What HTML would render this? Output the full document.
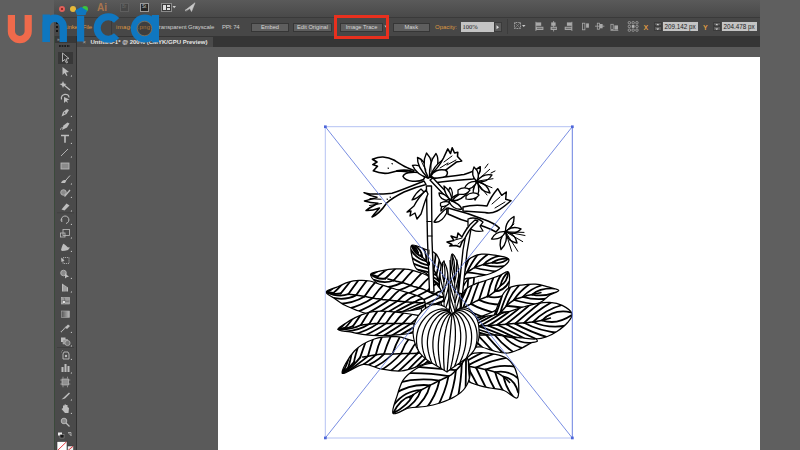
<!DOCTYPE html>
<html><head><meta charset="utf-8">
<style>
*{margin:0;padding:0;box-sizing:border-box}
html,body{width:800px;height:450px;overflow:hidden;background:#5f5f5f;font-family:"Liberation Sans",sans-serif}
.abs{position:absolute}
#win{position:absolute;left:54px;top:0;width:706px;height:450px;background:#575757}
#title{position:absolute;left:54px;top:0;width:706px;height:17px;background:linear-gradient(#5a5a5a,#494949)}
#ctrl{position:absolute;left:54px;top:17px;width:706px;height:19px;background:#474747;border-top:1px solid #3a3a3a}
#tabs{position:absolute;left:77px;top:36px;width:683px;height:11px;background:#353535}
#tab{position:absolute;left:77px;top:37px;width:136px;height:10px;background:#4a4a4a}
#canvas{position:absolute;left:77px;top:47px;width:683px;height:403px;background:#5a5a5a}
#board{position:absolute;left:218px;top:57px;width:542px;height:394px;background:#fff}
#tools{position:absolute;left:54px;top:36px;width:23px;height:414px;background:#4a4a4a;border-left:1px solid #3b4a3b;border-right:1px solid #303030}
.t{position:absolute;font-size:6.3px;white-space:nowrap;line-height:1}
.btn{position:absolute;top:22.5px;height:9px;background:#5e5e5e;border:1px solid #363636;color:#d8d8d8;font-size:5.7px;text-align:center;line-height:7.2px}
.inp{position:absolute;background:#c4c4c4;color:#222;font-size:7px;line-height:9px;padding-left:2px}
</style></head><body>
<div id="win"></div>
<div id="title"></div>
<div id="ctrl"></div>
<div id="tools"></div>
<div id="tabs"></div>
<div id="tab"></div>
<div id="canvas"></div>
<div id="board"></div>
<!-- title bar items -->
<div class="abs" style="left:58.5px;top:5.5px;width:6px;height:6px;border-radius:50%;background:#e2605a"></div>
<div class="abs" style="left:60.5px;top:7.5px;width:2px;height:2px;border-radius:50%;background:#7a1a14"></div>
<div class="abs" style="left:70px;top:5.5px;width:6px;height:6px;border-radius:50%;background:#e6b83a"></div>
<div class="abs" style="left:81.5px;top:5.5px;width:6px;height:6px;border-radius:50%;background:#3cc33c"></div>
<div class="t" style="left:97px;top:2.5px;font-size:10px;color:#a8754e;font-weight:bold;letter-spacing:0px">Ai</div>
<div class="abs" style="left:120px;top:3px;width:9px;height:8.5px;border:1px solid #5e5e5e;background:#474747"></div>
<div class="t" style="left:122px;top:5px;font-size:4.5px;color:#6a6a6a">Br</div>
<div class="abs" style="left:140px;top:3px;width:9px;height:8.5px;border:1px solid #9a9a9a;background:#262626"></div>
<div class="t" style="left:142px;top:5px;font-size:4.5px;color:#ccc">St</div>
<div class="abs" style="left:161px;top:2.5px;width:10.5px;height:9px;border:1px solid #8a8a8a;background:#3a3a3a"></div>
<div class="abs" style="left:163px;top:4.5px;width:3px;height:5px;background:#ddd"></div>
<div class="abs" style="left:167px;top:4.5px;width:3px;height:2px;background:#ddd"></div>
<div class="abs" style="left:167px;top:7.5px;width:3px;height:2px;background:#ddd"></div>
<svg class="abs" style="left:172px;top:5px" width="5" height="4"><path d="M0.5,1 L4,1 L2.25,3.2Z" fill="#ccc"/></svg>
<svg class="abs" style="left:184px;top:2px" width="12" height="10"><path d="M1,8.5 L11,0.8 L7.5,9.5 L6,6.5 Z M2,9.5 L4.5,7" fill="#c8c8c8" stroke="#c8c8c8" stroke-width="0.6"/></svg>

<!-- control bar -->
<div class="abs" style="left:55.5px;top:21px;width:2px;height:12px;background-image:radial-gradient(circle,#111 0.7px,transparent 0.9px);background-size:2px 4px"></div>
<div class="t" style="left:64px;top:23.6px;font-size:6px;letter-spacing:-0.1px;color:#de9842">Linked File</div>
<div class="abs" style="left:110.5px;top:19px;width:1px;height:15px;background:#3a3a3a"></div>
<div class="t" style="left:116px;top:23.6px;font-size:6px;letter-spacing:0.3px;color:#de9842">image1.png</div>
<div class="t" style="left:155.5px;top:23.6px;font-size:6px;letter-spacing:-0.1px;color:#cfcfcf">Transparent Grayscale</div>
<div class="t" style="left:222px;top:23.6px;font-size:6px;letter-spacing:-0.35px;color:#cfcfcf">PPI: 74</div>
<div class="btn" style="left:251px;width:38px">Embed</div>
<div class="btn" style="left:293px;width:39px">Edit Original</div>
<div class="btn" style="left:340px;width:43px">Image Trace</div>
<svg class="abs" style="left:383.5px;top:25px" width="4" height="4"><path d="M0.3,0.5 L3.3,0.5 L1.8,2.5Z" fill="#bbb"/></svg>
<div class="btn" style="left:392.5px;width:37.5px">Mask</div>
<div class="abs" style="left:334px;top:14.5px;width:54.5px;height:24px;border:3px solid #e8301e"></div>
<div class="t" style="left:435px;top:23.6px;font-size:6px;color:#de9842">Opacity:</div>
<div class="inp" style="left:460.5px;top:22px;width:33px;height:9.5px;font-family:'Liberation Serif',serif;font-size:6.5px;line-height:9px">100%</div>
<div class="abs" style="left:493.5px;top:22px;width:8.5px;height:9.5px;background:#5a5a5a;border:1px solid #3a3a3a"></div>
<svg class="abs" style="left:496px;top:24.5px" width="4" height="5"><path d="M0.5,0.3 L3,2.2 L0.5,4.2Z" fill="#ddd"/></svg>
<div class="abs" style="left:507px;top:19px;width:1px;height:15px;background:#3c3c3c"></div>
<svg class="abs" style="left:513px;top:21px" width="14" height="12">
 <rect x="1.5" y="1.5" width="6" height="6" fill="none" stroke="#bbb" stroke-width="0.8" stroke-dasharray="1 0.6"/>
 <path d="M1.5,1.5 L7.5,7.5 M7.5,1.5 L1.5,7.5" stroke="#999" stroke-width="0.5"/>
 <path d="M9,4 L12.5,4 L10.75,6Z" fill="#ccc"/>
</svg>
<svg class="abs" style="left:0;top:0" width="650" height="40">
 <g fill="#a9a9a9">
  <rect x="535.9" y="22.4" width="5.3" height="3.4"/><rect x="535.9" y="26.75" width="7.5" height="3.2"/>
  <rect x="551.2" y="22.4" width="4.4" height="3.4"/><rect x="550.6" y="26.75" width="6.3" height="3.2"/>
  <rect x="566.9" y="22.4" width="5" height="3.4"/><rect x="564.7" y="26.75" width="7.2" height="3.2"/>
  <rect x="586.1" y="23.4" width="2.8" height="4.3"/>
  <rect x="600" y="24" width="2.6" height="4.3"/>
  <rect x="614.4" y="25.4" width="3.6" height="4.2"/>
 </g>
 <g fill="none" stroke="#a9a9a9" stroke-width="0.8">
  <path d="M535.9,21.8 V31 M553.6,21 V31.5 M571.9,21.8 V31"/>
  <rect x="582.6" y="23.2" width="2.3" height="6.6"/>
  <rect x="597.3" y="23.2" width="2.3" height="6"/>
  <path d="M595,26.2 H604.4"/>
  <rect x="610.9" y="24.3" width="2.3" height="5.3"/>
  <path d="M610.5,30.4 H618.3"/>
 </g>
 <g fill="#575757"><rect x="537" y="27.8" width="5.5" height="0.9"/><rect x="551.7" y="27.8" width="4.5" height="0.9"/><rect x="565.7" y="27.8" width="5.5" height="0.9"/></g>
 <g fill="none" stroke="#b5b5b5" stroke-width="0.7">
  <rect x="628.2" y="21.6" width="2.3" height="2.3" rx="0.8"/><rect x="632" y="21.6" width="2.3" height="2.3" rx="0.8"/><rect x="635.8" y="21.6" width="2.3" height="2.3" rx="0.8"/>
  <rect x="628.2" y="25.3" width="2.3" height="2.3" rx="0.8"/><rect x="635.8" y="25.3" width="2.3" height="2.3" rx="0.8"/>
  <rect x="628.2" y="29" width="2.3" height="2.3" rx="0.8"/><rect x="632" y="29" width="2.3" height="2.3" rx="0.8"/><rect x="635.8" y="29" width="2.3" height="2.3" rx="0.8"/>
 </g>
 <rect x="631.8" y="25.1" width="2.7" height="2.7" fill="#b5b5b5"/>
</svg>
<div class="t" style="left:643.5px;top:23.5px;font-size:7px;color:#de9842;font-weight:bold">X</div>
<div class="abs" style="left:653.5px;top:21.5px;width:8.5px;height:4.8px;background:#5c5c5c;border:1px solid #3b3b3b"></div>
<div class="abs" style="left:653.5px;top:26.3px;width:8.5px;height:4.8px;background:#5c5c5c;border:1px solid #3b3b3b"></div>
<svg class="abs" style="left:656px;top:22.5px" width="4" height="8"><path d="M0.3,2.2 L3.3,2.2 L1.8,0.7Z M0.3,5.5 L3.3,5.5 L1.8,7Z" fill="#ddd"/></svg>
<div class="inp" style="left:662.5px;top:21.5px;width:35.5px;height:9.8px;font-size:6.3px;line-height:10px">209.142 px</div>
<div class="t" style="left:703px;top:23.5px;font-size:7px;color:#de9842;font-weight:bold">Y</div>
<div class="abs" style="left:712.5px;top:21.5px;width:8.5px;height:4.8px;background:#5c5c5c;border:1px solid #3b3b3b"></div>
<div class="abs" style="left:712.5px;top:26.3px;width:8.5px;height:4.8px;background:#5c5c5c;border:1px solid #3b3b3b"></div>
<svg class="abs" style="left:715px;top:22.5px" width="4" height="8"><path d="M0.3,2.2 L3.3,2.2 L1.8,0.7Z M0.3,5.5 L3.3,5.5 L1.8,7Z" fill="#ddd"/></svg>
<div class="inp" style="left:721.5px;top:21.5px;width:35.5px;height:9.8px;font-size:6.3px;line-height:10px">204.478 px</div>

<!-- tab bar -->
<div class="t" style="left:82.5px;top:39px;font-size:6px;color:#aaa">×</div>
<div class="t" style="left:90.5px;top:38.8px;font-size:6px;color:#e4e4e4;font-weight:bold">Untitled-1* @ 200% (CMYK/GPU Preview)</div>

<!-- tools panel -->
<div class="abs" style="left:55px;top:36px;width:21px;height:6.5px;background:#383838"></div>
<div class="t" style="left:57px;top:37px;font-size:5px;color:#aaa">»</div>
<div class="abs" style="left:59px;top:45px;width:10.6px;height:2px;background-image:linear-gradient(90deg,#1e1e1e 62%,transparent 62%);background-size:2.65px 2px"></div>
<div class="abs" style="left:57.5px;top:52.2px;width:15.5px;height:12.2px;background:#383838"></div>
<svg class="abs" style="left:54px;top:47px" width="23" height="403" fill="#c8c8c8" stroke="#c8c8c8">
</svg>

<svg class="abs" style="left:0;top:0" width="80" height="450"><path d="M62.5,53.0 L62.5,61.5 L64.5,59.5 L66.5,63.0 L67.5,62.5 L66,59.0 L69,58.5 Z" fill="none" stroke="#bdbdbd" stroke-width="0.9"/>
<path d="M62.5,67.0 L62.5,75.0 L64.5,73.0 L66.5,76.0 L67.5,75.5 L66,72.5 L69,72.0 Z" fill="#bdbdbd"/>
<path d="M64,85.0 L70,90.0" stroke="#bdbdbd" stroke-width="1.3"/><path d="M63,81.0 L64,83.5 L66.5,84.0 L64.2,85.5 L63,88.0 L62,85.5 L59.5,84.0 L62,83.5 Z" fill="#bdbdbd"/>
<path d="M61.5,99.5 C60,93.5 69,92.5 69,97.5" fill="none" stroke="#bdbdbd" stroke-width="1.2"/><path d="M64,97.0 L64,103.0 L65.8,101.3 L68,103.0 L67,100.3 L69.5,99.5 Z" fill="#bdbdbd"/>
<path d="M61.5,116.5 L63,112.0 L67,109.0 L69,110.0 L66.5,114.0 Z" fill="#bdbdbd"/><circle cx="64.6" cy="113.0" r="0.8" fill="#474747"/>
<path d="M62,130.0 L63.5,125.5 L67.5,122.5 L69.5,123.5 L67,127.5 Z" fill="#bdbdbd"/><path d="M60.5,130.0 c0,-2 1.5,-3 2.5,-2" fill="none" stroke="#bdbdbd" stroke-width="0.8"/>
<path d="M61,135.5 h8 M65,135.5 v7.2" fill="none" stroke="#bdbdbd" stroke-width="1.6"/>
<path d="M61,156.0 L68,149.0" stroke="#bdbdbd" stroke-width="0.9"/>
<rect x="61" y="163.0" width="8" height="6" fill="#8a8a8a" stroke="#bdbdbd" stroke-width="0.8"/>
<path d="M66,180.0 L70,175.5" stroke="#bdbdbd" stroke-width="1"/><path d="M61,183.0 C62,180.5 64,179.5 66.5,180.5 L65,183.0 Z" fill="#bdbdbd"/>
<circle cx="63.5" cy="192.5" r="2.8" fill="#8a8a8a" stroke="#bdbdbd" stroke-width="0.8"/><path d="M64.5,196.5 L70,190.0" stroke="#bdbdbd" stroke-width="1.3"/>
<path d="M61.5,209.5 L66.5,203.5 L69.5,205.5 L64.5,210.5 Z" fill="#bdbdbd"/>
<rect x="57" y="212.5" width="17" height="0.7" fill="#3c3c3c"/>
<path d="M62,222.0 A3.8,3.8 0 1 1 66,223.5" fill="none" stroke="#bdbdbd" stroke-width="1"/><path d="M60.5,220.0 h2" stroke="#bdbdbd" stroke-width="0.8"/>
<rect x="63" y="229.5" width="6.5" height="6" fill="none" stroke="#bdbdbd" stroke-width="0.8"/><rect x="60.5" y="233.0" width="4.5" height="4" fill="none" stroke="#bdbdbd" stroke-width="0.8"/>
<path d="M61,250.0 C62,247.0 63,243.0 64,244.0 C66,245.0 67,248.0 70,247.5 L68,250.0 C66,250.5 64,251.0 62,251.0 Z" fill="#bdbdbd"/>
<rect x="63" y="257.5" width="6" height="6" fill="none" stroke="#bdbdbd" stroke-width="0.8" stroke-dasharray="1.2 0.8"/><path d="M61,257.5 L64.5,260.5 L61.5,262.0 Z" fill="#bdbdbd"/>
<circle cx="63.5" cy="273.0" r="2.8" fill="#8a8a8a" stroke="#bdbdbd" stroke-width="0.8"/><path d="M65,273.0 L65,278.5 L67,277.0 L69,277.0 Z" fill="#bdbdbd"/>
<path d="M62,283.5 L62,291.5 L68,291.5 L68,287.5 Z" fill="#bdbdbd"/><path d="M64,285.5 v6 M66,286.5 v6" stroke="#474747" stroke-width="0.5"/>
<rect x="61.5" y="297.5" width="8" height="6.5" fill="#9a9a9a" stroke="#bdbdbd" stroke-width="0.6"/><path d="M61.5,301.0 C64,300.0 66,302.0 69.5,301.0 M64,297.5 C65,300.0 65,302.0 64,304.0" fill="none" stroke="#555" stroke-width="0.6"/><circle cx="64" cy="302.0" r="1" fill="#fff"/>
<defs><linearGradient id="gr" x1="0" x2="1"><stop offset="0" stop-color="#555"/><stop offset="1" stop-color="#bbb"/></linearGradient></defs>
<rect x="61.5" y="311.0" width="8" height="6.5" fill="url(#gr)" stroke="#a8a8a8" stroke-width="0.6"/>
<path d="M61,332.0 L66,327.0" stroke="#bdbdbd" stroke-width="1.2" stroke-dasharray="1 0.6"/><path d="M65,327.5 L68,324.5 L70,326.0 L67,329.0 Z" fill="#bdbdbd"/>
<rect x="61" y="337.5" width="4.5" height="4.5" fill="#bdbdbd"/><rect x="63" y="339.5" width="4.5" height="4.5" fill="#999" stroke="#bdbdbd" stroke-width="0.5"/><circle cx="67.5" cy="343.0" r="2.6" fill="#777" stroke="#bdbdbd" stroke-width="0.7"/>
<rect x="57" y="347" width="17" height="0.7" fill="#3c3c3c"/>
<path d="M64,352.0 L68,352.0 L69,354.0 L69,359.0 L63,359.0 L63,354.0 Z" fill="none" stroke="#bdbdbd" stroke-width="0.9"/><circle cx="66" cy="356.0" r="1.2" fill="#bdbdbd"/><path d="M61,352.0 l0.5,0 M62.5,350.5 l0.5,0" stroke="#bdbdbd" stroke-width="0.9"/>
<rect x="61.5" y="367.0" width="2" height="5" fill="#bdbdbd"/><rect x="64.5" y="364.0" width="2" height="8" fill="#bdbdbd"/><rect x="67.5" y="366.0" width="2" height="6" fill="#bdbdbd"/>
<rect x="62" y="379.0" width="6.5" height="6" fill="#8f8f8f" stroke="#bdbdbd" stroke-width="0.7"/><path d="M63,378.5 v-1.8 M67.5,378.5 v-1.8 M63,385.5 v1.8 M67.5,385.5 v1.8 M62,380.0 h-1.8 M68.5,380.0 h1.8 M62,384.0 h-1.8 M68.5,384.0 h1.8" stroke="#bdbdbd" stroke-width="0.6"/>
<path d="M61.5,399.5 L69,392.5 L70,393.5 L65,398.5 Z" fill="#bdbdbd"/>
<path d="M61.5,409.0 L63,408.0 L63,405.5 L64.5,405.5 L64.5,404.5 L66,404.5 L66,405.0 L67.5,405.0 L67.5,407.0 L69,408.0 L68.5,413.0 L65,413.0 Z" fill="#bdbdbd"/>
<circle cx="64" cy="421.0" r="2.8" fill="#8a8a8a" stroke="#bdbdbd" stroke-width="0.9"/><path d="M66,423.0 L69.5,426.5" stroke="#bdbdbd" stroke-width="1.3"/>
<rect x="58" y="432.5" width="4" height="3" fill="#eee"/><rect x="60" y="434.5" width="4" height="3.5" fill="#1a1a1a" stroke="#bbb" stroke-width="0.4"/>
<path d="M68,432.5 l3,0 l0,3 M68.5,433 l3,3" fill="none" stroke="#ccc" stroke-width="0.7"/>
<rect x="57" y="441.5" width="10" height="9" fill="#fff" stroke="#333" stroke-width="0.6"/><path d="M57.5,450.5 L66.5,441.8" stroke="#e0252a" stroke-width="0.9"/>
<rect x="67.5" y="446" width="6" height="5" fill="#eee" stroke="#333" stroke-width="0.5"/><path d="M68,450.5 L73,446.3" stroke="#e0252a" stroke-width="0.9"/>
<path d="M70.5,76.5 L72,75.0 L72,76.5 Z" fill="#cfcfcf"/>
<path d="M70.5,117.0 L72,115.5 L72,117.0 Z" fill="#cfcfcf"/>
<path d="M70.5,130.5 L72,129.0 L72,130.5 Z" fill="#cfcfcf"/>
<path d="M70.5,144.0 L72,142.5 L72,144.0 Z" fill="#cfcfcf"/>
<path d="M70.5,157.5 L72,156.0 L72,157.5 Z" fill="#cfcfcf"/>
<path d="M70.5,184.5 L72,183.0 L72,184.5 Z" fill="#cfcfcf"/>
<path d="M70.5,198.0 L72,196.5 L72,198.0 Z" fill="#cfcfcf"/>
<path d="M70.5,211.5 L72,210.0 L72,211.5 Z" fill="#cfcfcf"/>
<path d="M70.5,225.0 L72,223.5 L72,225.0 Z" fill="#cfcfcf"/>
<path d="M70.5,238.5 L72,237.0 L72,238.5 Z" fill="#cfcfcf"/>
<path d="M70.5,252.0 L72,250.5 L72,252.0 Z" fill="#cfcfcf"/>
<path d="M70.5,279.0 L72,277.5 L72,279.0 Z" fill="#cfcfcf"/>
<path d="M70.5,292.5 L72,291.0 L72,292.5 Z" fill="#cfcfcf"/>
<path d="M70.5,333.0 L72,331.5 L72,333.0 Z" fill="#cfcfcf"/>
<path d="M70.5,346.5 L72,345.0 L72,346.5 Z" fill="#cfcfcf"/>
<path d="M70.5,360.0 L72,358.5 L72,360.0 Z" fill="#cfcfcf"/>
<path d="M70.5,373.5 L72,372.0 L72,373.5 Z" fill="#cfcfcf"/>
<path d="M70.5,400.5 L72,399.0 L72,400.5 Z" fill="#cfcfcf"/>
<path d="M70.5,414.0 L72,412.5 L72,414.0 Z" fill="#cfcfcf"/></svg>
<svg class="abs" style="left:0;top:0" width="800" height="450" viewBox="0 0 800 450">
<clipPath id="fill0"><path d="M424,262 L478,258 L480,320 L420,322 Z"/></clipPath>
<path d="M424,262 L478,258 L480,320 L420,322 Z" fill="#fff"/>
<g clip-path="url(#fill0)" stroke="#000" stroke-width="1.7" fill="none">
<path d="M423.0,325 Q419.0,290 411.0,255"/>
<path d="M427.5,325 Q424.5,290 417.5,255"/>
<path d="M432.0,325 Q430.0,290 424.0,255"/>
<path d="M436.5,325 Q435.5,290 430.5,255"/>
<path d="M441.0,325 Q441.0,290 437.0,255"/>
<path d="M445.5,325 Q446.5,290 443.5,255"/>
<path d="M450.0,325 Q452.0,290 450.0,255"/>
<path d="M454.5,325 Q457.5,290 456.5,255"/>
<path d="M459.0,325 Q463.0,290 463.0,255"/>
<path d="M463.5,325 Q468.5,290 469.5,255"/>
<path d="M468.0,325 Q474.0,290 476.0,255"/>
<path d="M472.5,325 Q479.5,290 482.5,255"/>
<path d="M477.0,325 Q485.0,290 489.0,255"/>
</g>
<clipPath id="lf1"><path d="M446.0,292.0 C446.3,288.0 443.7,274.3 442.0,268.0 C440.3,261.7 438.7,257.1 436.0,254.0 C433.3,250.9 430.1,251.0 426.0,249.5 C421.9,248.0 414.0,243.8 411.7,245.2 C409.4,246.6 411.5,253.9 412.3,257.8 C413.1,261.8 413.8,266.0 416.5,268.9 C419.2,271.8 424.4,271.1 428.3,275.0 C432.2,278.9 437.1,289.2 440.0,292.0 C442.9,294.8 445.7,296.0 446.0,292.0Z"/></clipPath>
<path d="M446.0,292.0 C446.3,288.0 443.7,274.3 442.0,268.0 C440.3,261.7 438.7,257.1 436.0,254.0 C433.3,250.9 430.1,251.0 426.0,249.5 C421.9,248.0 414.0,243.8 411.7,245.2 C409.4,246.6 411.5,253.9 412.3,257.8 C413.1,261.8 413.8,266.0 416.5,268.9 C419.2,271.8 424.4,271.1 428.3,275.0 C432.2,278.9 437.1,289.2 440.0,292.0 C442.9,294.8 445.7,296.0 446.0,292.0Z" fill="#fff"/>
<g clip-path="url(#lf1)" stroke="#000" stroke-width="1.80" fill="none" stroke-linecap="round">
<path d="M443.0,292.0 C442.8,291.4 442.0,289.5 441.5,288.2 C441.0,286.9 440.5,285.6 440.0,284.4 C439.5,283.1 439.0,281.8 438.5,280.5 C438.0,279.3 437.5,278.0 437.1,276.7 C436.6,275.4 436.2,274.1 435.6,272.9 C434.9,271.7 434.1,270.7 433.3,269.7 C432.5,268.7 431.6,267.8 430.7,266.8 C429.8,265.8 428.9,264.9 428.0,263.8 C427.2,262.8 426.6,261.6 425.8,260.6 C424.9,259.6 424.0,258.7 423.0,257.8 C422.1,256.9 420.8,255.5 420.3,255.0" stroke-width="1.53"/>
<path d="M460.5,337.1 Q455.5,334.9 451.0,328.9"/>
<path d="M458.4,331.4 Q453.9,328.8 450.2,322.2"/>
<path d="M456.2,325.8 Q452.4,322.6 449.5,315.5"/>
<path d="M454.0,320.2 Q450.9,316.5 448.8,308.8"/>
<path d="M451.8,314.5 Q449.4,310.4 448.0,302.1"/>
<path d="M449.6,308.9 Q447.8,304.3 447.3,295.4"/>
<path d="M447.4,303.3 Q446.3,298.1 446.5,288.6"/>
<path d="M445.2,297.6 Q444.8,292.0 445.8,281.9"/>
<path d="M443.0,292.0 Q443.3,285.9 445.0,275.2"/>
<path d="M440.8,286.4 Q441.8,279.7 444.3,268.5"/>
<path d="M438.6,280.7 Q440.2,273.6 442.5,261.9"/>
<path d="M436.4,275.1 Q438.2,267.8 440.3,255.4"/>
<path d="M433.6,270.0 Q435.1,262.4 436.0,250.9"/>
<path d="M429.7,265.7 Q432.0,257.0 429.5,248.7"/>
<path d="M426.1,261.1 Q427.0,253.6 422.5,247.1"/>
<path d="M422.2,256.9 Q421.8,250.5 415.3,245.8"/>
<path d="M418.2,252.9 Q416.8,247.9 411.7,245.2"/>
<path d="M415.0,249.1 Q411.7,245.2 411.7,245.2"/>
<path d="M460.5,337.1 Q460.4,326.5 456.6,313.9"/>
<path d="M458.4,331.4 Q457.6,321.4 453.0,309.3"/>
<path d="M456.2,325.8 Q454.7,316.3 449.3,304.8"/>
<path d="M454.0,320.2 Q451.9,311.1 445.7,300.2"/>
<path d="M451.8,314.5 Q449.0,306.0 442.0,295.7"/>
<path d="M449.6,308.9 Q446.1,300.8 438.4,291.1"/>
<path d="M447.4,303.3 Q443.3,295.7 434.7,286.5"/>
<path d="M445.2,297.6 Q440.4,290.6 431.1,282.0"/>
<path d="M443.0,292.0 Q437.5,285.4 427.4,277.4"/>
<path d="M440.8,286.4 Q434.7,280.3 422.5,274.4"/>
<path d="M438.6,280.7 Q431.8,275.1 416.9,272.2"/>
<path d="M436.4,275.1 Q427.7,271.3 412.8,268.7"/>
<path d="M433.6,270.0 Q423.0,268.0 411.3,262.9"/>
<path d="M429.7,265.7 Q419.3,263.7 410.6,256.8"/>
<path d="M426.1,261.1 Q416.5,258.8 411.2,250.3"/>
<path d="M422.2,256.9 Q414.2,253.9 411.7,245.2"/>
<path d="M418.2,252.9 Q412.8,248.8 411.7,245.2"/>
</g>
<path d="M446.0,292.0 C446.3,288.0 443.7,274.3 442.0,268.0 C440.3,261.7 438.7,257.1 436.0,254.0 C433.3,250.9 430.1,251.0 426.0,249.5 C421.9,248.0 414.0,243.8 411.7,245.2 C409.4,246.6 411.5,253.9 412.3,257.8 C413.1,261.8 413.8,266.0 416.5,268.9 C419.2,271.8 424.4,271.1 428.3,275.0 C432.2,278.9 437.1,289.2 440.0,292.0 C442.9,294.8 445.7,296.0 446.0,292.0Z" fill="none" stroke="#000" stroke-width="1.25" stroke-linejoin="round"/>
<clipPath id="lf2"><path d="M450.0,322.0 C451.7,318.3 449.4,308.3 449.0,300.0 C448.6,291.7 448.5,278.3 447.5,272.0 C446.5,265.7 444.2,261.7 443.0,262.0 C441.8,262.3 440.7,267.7 440.0,274.0 C439.3,280.3 439.2,292.0 439.0,300.0 C438.8,308.0 437.2,318.3 439.0,322.0 C440.8,325.7 448.3,325.7 450.0,322.0Z"/></clipPath>
<path d="M450.0,322.0 C451.7,318.3 449.4,308.3 449.0,300.0 C448.6,291.7 448.5,278.3 447.5,272.0 C446.5,265.7 444.2,261.7 443.0,262.0 C441.8,262.3 440.7,267.7 440.0,274.0 C439.3,280.3 439.2,292.0 439.0,300.0 C438.8,308.0 437.2,318.3 439.0,322.0 C440.8,325.7 448.3,325.7 450.0,322.0Z" fill="#fff"/>
<g clip-path="url(#lf2)" stroke="#000" stroke-width="1.20" fill="none" stroke-linecap="round">
<path d="M444.5,322.0 C444.5,321.3 444.4,319.3 444.4,317.9 C444.4,316.5 444.3,315.1 444.3,313.8 C444.3,312.4 444.2,311.0 444.2,309.7 C444.2,308.3 444.2,306.9 444.1,305.5 C444.1,304.2 444.1,302.8 444.0,301.4 C444.0,300.1 444.0,298.7 444.0,297.3 C444.0,295.9 444.0,294.6 443.9,293.2 C443.9,291.8 443.9,290.5 443.9,289.1 C443.9,287.7 443.9,286.4 443.9,285.0 C443.9,283.6 443.9,282.2 443.8,280.9 C443.8,279.5 443.8,277.4 443.8,276.8" stroke-width="1.02"/>
<path d="M446.3,402.9 Q450.5,395.8 454.9,385.1"/>
<path d="M446.1,392.8 Q450.1,385.7 454.4,374.9"/>
<path d="M445.9,382.7 Q449.8,375.5 453.9,364.7"/>
<path d="M445.7,372.6 Q449.4,365.4 453.3,354.6"/>
<path d="M445.4,362.5 Q449.0,355.3 452.8,344.4"/>
<path d="M445.2,352.3 Q448.6,345.1 452.3,334.2"/>
<path d="M445.0,342.2 Q448.3,335.0 451.8,324.0"/>
<path d="M444.7,332.1 Q447.9,324.8 451.2,313.9"/>
<path d="M444.5,322.0 Q447.5,314.7 450.7,303.7"/>
<path d="M444.3,311.9 Q447.2,304.6 450.1,293.5"/>
<path d="M444.0,301.8 Q446.8,294.4 449.4,283.3"/>
<path d="M443.9,291.7 Q446.4,284.3 448.7,273.2"/>
<path d="M443.9,281.6 Q446.1,274.1 444.0,263.8"/>
<path d="M446.3,402.9 Q441.9,394.9 436.9,383.1"/>
<path d="M446.1,392.8 Q441.8,384.8 437.0,373.1"/>
<path d="M445.9,382.7 Q441.7,374.8 437.1,363.0"/>
<path d="M445.7,372.6 Q441.6,364.7 437.1,353.0"/>
<path d="M445.4,362.5 Q441.5,354.6 437.2,342.9"/>
<path d="M445.2,352.3 Q441.4,344.5 437.3,332.9"/>
<path d="M445.0,342.2 Q441.3,334.4 437.3,322.8"/>
<path d="M444.7,332.1 Q441.2,324.3 437.4,312.8"/>
<path d="M444.5,322.0 Q441.1,314.3 437.5,302.7"/>
<path d="M444.3,311.9 Q441.0,304.2 437.9,292.7"/>
<path d="M444.0,301.8 Q441.1,294.1 438.4,282.6"/>
<path d="M443.9,291.7 Q441.3,284.0 439.3,272.6"/>
<path d="M443.9,281.6 Q441.5,273.9 442.7,262.8"/>
</g>
<path d="M450.0,322.0 C451.7,318.3 449.4,308.3 449.0,300.0 C448.6,291.7 448.5,278.3 447.5,272.0 C446.5,265.7 444.2,261.7 443.0,262.0 C441.8,262.3 440.7,267.7 440.0,274.0 C439.3,280.3 439.2,292.0 439.0,300.0 C438.8,308.0 437.2,318.3 439.0,322.0 C440.8,325.7 448.3,325.7 450.0,322.0Z" fill="none" stroke="#000" stroke-width="1.25" stroke-linejoin="round"/>
<clipPath id="lf3"><path d="M461.0,322.0 C462.7,318.3 460.5,309.3 460.0,300.0 C459.5,290.7 459.3,273.7 458.0,266.0 C456.7,258.3 453.2,253.7 452.0,254.0 C450.8,254.3 450.8,260.3 450.5,268.0 C450.2,275.7 450.1,291.0 450.0,300.0 C449.9,309.0 448.2,318.3 450.0,322.0 C451.8,325.7 459.3,325.7 461.0,322.0Z"/></clipPath>
<path d="M461.0,322.0 C462.7,318.3 460.5,309.3 460.0,300.0 C459.5,290.7 459.3,273.7 458.0,266.0 C456.7,258.3 453.2,253.7 452.0,254.0 C450.8,254.3 450.8,260.3 450.5,268.0 C450.2,275.7 450.1,291.0 450.0,300.0 C449.9,309.0 448.2,318.3 450.0,322.0 C451.8,325.7 459.3,325.7 461.0,322.0Z" fill="#fff"/>
<g clip-path="url(#lf3)" stroke="#000" stroke-width="1.20" fill="none" stroke-linecap="round">
<path d="M455.5,322.0 C455.5,321.2 455.4,318.9 455.4,317.3 C455.4,315.8 455.3,314.2 455.3,312.7 C455.3,311.1 455.2,309.6 455.2,308.0 C455.1,306.5 455.1,304.9 455.1,303.4 C455.0,301.8 455.0,300.2 455.0,298.7 C454.9,297.1 454.9,295.6 454.9,294.0 C454.8,292.5 454.8,290.9 454.8,289.4 C454.7,287.8 454.7,286.3 454.7,284.7 C454.6,283.2 454.6,281.6 454.6,280.1 C454.5,278.5 454.5,276.9 454.5,275.4 C454.4,273.8 454.4,271.5 454.3,270.7" stroke-width="1.02"/>
<path d="M457.3,400.6 Q461.4,392.7 465.7,380.7"/>
<path d="M457.1,390.8 Q461.0,382.9 465.2,370.7"/>
<path d="M456.9,380.9 Q460.7,373.0 464.7,360.8"/>
<path d="M456.6,371.1 Q460.3,363.1 464.2,350.8"/>
<path d="M456.4,361.3 Q459.9,353.2 463.6,340.9"/>
<path d="M456.2,351.5 Q459.6,343.3 463.1,331.0"/>
<path d="M456.0,341.6 Q459.2,333.5 462.6,321.0"/>
<path d="M455.7,331.8 Q458.9,323.6 462.1,311.1"/>
<path d="M455.5,322.0 Q458.5,313.7 461.6,301.1"/>
<path d="M455.3,312.2 Q458.1,303.8 460.9,291.2"/>
<path d="M455.0,302.4 Q457.7,293.9 460.2,281.2"/>
<path d="M454.8,292.5 Q457.3,284.1 459.5,271.3"/>
<path d="M454.6,282.7 Q456.9,274.2 456.7,261.9"/>
<path d="M454.4,272.9 Q455.9,264.5 452.0,254.0"/>
<path d="M457.3,400.6 Q452.8,391.4 448.0,377.9"/>
<path d="M457.1,390.8 Q452.8,381.6 448.0,368.2"/>
<path d="M456.9,380.9 Q452.7,371.8 448.1,358.5"/>
<path d="M456.6,371.1 Q452.6,362.1 448.2,348.8"/>
<path d="M456.4,361.3 Q452.5,352.3 448.2,339.1"/>
<path d="M456.2,351.5 Q452.4,342.5 448.3,329.4"/>
<path d="M456.0,341.6 Q452.3,332.8 448.4,319.7"/>
<path d="M455.7,331.8 Q452.2,323.0 448.4,310.0"/>
<path d="M455.5,322.0 Q452.1,313.3 448.5,300.3"/>
<path d="M455.3,312.2 Q452.0,303.5 448.8,290.6"/>
<path d="M455.0,302.4 Q452.0,293.7 449.0,280.9"/>
<path d="M454.8,292.5 Q452.0,284.0 449.3,271.2"/>
<path d="M454.6,282.7 Q452.0,274.2 450.6,261.4"/>
<path d="M454.4,272.9 Q452.1,264.5 452.0,254.0"/>
</g>
<path d="M461.0,322.0 C462.7,318.3 460.5,309.3 460.0,300.0 C459.5,290.7 459.3,273.7 458.0,266.0 C456.7,258.3 453.2,253.7 452.0,254.0 C450.8,254.3 450.8,260.3 450.5,268.0 C450.2,275.7 450.1,291.0 450.0,300.0 C449.9,309.0 448.2,318.3 450.0,322.0 C451.8,325.7 459.3,325.7 461.0,322.0Z" fill="none" stroke="#000" stroke-width="1.25" stroke-linejoin="round"/>
<clipPath id="lf4"><path d="M458.0,285.0 C458.5,280.7 460.8,270.5 463.0,266.0 C465.2,261.5 467.9,259.8 471.0,257.8 C474.1,255.8 477.9,254.6 481.7,254.2 C485.5,253.8 489.6,254.3 494.0,255.1 C498.4,255.8 506.5,257.0 508.3,258.7 C510.1,260.4 507.8,263.0 504.8,265.5 C501.9,268.0 495.4,271.6 490.6,273.5 C485.9,275.4 480.2,275.9 476.3,277.0 C472.4,278.1 470.1,277.5 467.4,280.0 C464.7,282.5 461.6,291.2 460.0,292.0 C458.4,292.8 457.5,289.3 458.0,285.0Z"/></clipPath>
<path d="M458.0,285.0 C458.5,280.7 460.8,270.5 463.0,266.0 C465.2,261.5 467.9,259.8 471.0,257.8 C474.1,255.8 477.9,254.6 481.7,254.2 C485.5,253.8 489.6,254.3 494.0,255.1 C498.4,255.8 506.5,257.0 508.3,258.7 C510.1,260.4 507.8,263.0 504.8,265.5 C501.9,268.0 495.4,271.6 490.6,273.5 C485.9,275.4 480.2,275.9 476.3,277.0 C472.4,278.1 470.1,277.5 467.4,280.0 C464.7,282.5 461.6,291.2 460.0,292.0 C458.4,292.8 457.5,289.3 458.0,285.0Z" fill="#fff"/>
<g clip-path="url(#lf4)" stroke="#000" stroke-width="1.80" fill="none" stroke-linecap="round">
<path d="M459.0,288.5 C459.3,287.8 460.1,285.8 460.7,284.4 C461.3,283.1 461.8,281.7 462.4,280.4 C463.0,279.0 463.5,277.5 464.1,276.3 C464.8,275.1 465.4,273.9 466.4,272.9 C467.4,272.0 468.7,271.3 469.9,270.5 C471.1,269.7 472.3,268.9 473.5,268.2 C474.8,267.5 476.1,266.9 477.5,266.4 C478.8,265.9 480.3,265.6 481.7,265.1 C483.2,264.7 484.6,264.2 486.0,263.9 C487.4,263.5 488.8,263.3 490.2,263.1 C491.6,262.8 493.7,262.3 494.4,262.2" stroke-width="1.53"/>
<path d="M430.3,357.1 Q437.4,351.7 445.0,341.0"/>
<path d="M433.8,348.5 Q440.4,342.5 447.2,331.1"/>
<path d="M437.4,340.0 Q443.3,333.3 449.4,321.2"/>
<path d="M441.0,331.4 Q446.3,324.1 451.6,311.3"/>
<path d="M444.6,322.8 Q449.2,314.9 453.8,301.4"/>
<path d="M448.2,314.2 Q452.2,305.7 456.0,291.5"/>
<path d="M451.8,305.7 Q455.1,296.5 458.2,281.6"/>
<path d="M455.4,297.1 Q458.1,287.4 460.4,271.7"/>
<path d="M459.0,288.5 Q461.0,278.2 463.6,262.1"/>
<path d="M462.6,279.9 Q464.2,269.3 470.6,254.7"/>
<path d="M467.0,272.4 Q471.2,262.9 480.1,251.4"/>
<path d="M474.7,267.5 Q480.0,259.2 490.3,252.7"/>
<path d="M483.6,264.6 Q489.3,257.9 500.4,255.7"/>
<path d="M492.5,262.6 Q498.7,258.1 508.3,258.7"/>
<path d="M430.3,357.1 Q429.5,347.2 431.6,334.8"/>
<path d="M433.8,348.5 Q433.8,339.2 436.6,327.6"/>
<path d="M437.4,340.0 Q438.0,331.3 441.6,320.3"/>
<path d="M441.0,331.4 Q442.2,323.3 446.6,313.1"/>
<path d="M444.6,322.8 Q446.5,315.3 451.5,305.8"/>
<path d="M448.2,314.2 Q450.7,307.4 456.5,298.6"/>
<path d="M451.8,305.7 Q454.9,299.4 461.5,291.3"/>
<path d="M455.4,297.1 Q459.2,291.4 466.5,284.1"/>
<path d="M459.0,288.5 Q463.4,283.5 474.1,280.2"/>
<path d="M462.6,279.9 Q468.6,276.7 482.8,278.5"/>
<path d="M467.0,272.4 Q476.6,273.1 491.4,276.5"/>
<path d="M474.7,267.5 Q485.3,270.6 498.8,271.6"/>
<path d="M483.6,264.6 Q493.7,267.7 505.8,265.9"/>
<path d="M492.5,262.6 Q501.9,264.5 508.3,258.7"/>
</g>
<path d="M458.0,285.0 C458.5,280.7 460.8,270.5 463.0,266.0 C465.2,261.5 467.9,259.8 471.0,257.8 C474.1,255.8 477.9,254.6 481.7,254.2 C485.5,253.8 489.6,254.3 494.0,255.1 C498.4,255.8 506.5,257.0 508.3,258.7 C510.1,260.4 507.8,263.0 504.8,265.5 C501.9,268.0 495.4,271.6 490.6,273.5 C485.9,275.4 480.2,275.9 476.3,277.0 C472.4,278.1 470.1,277.5 467.4,280.0 C464.7,282.5 461.6,291.2 460.0,292.0 C458.4,292.8 457.5,289.3 458.0,285.0Z" fill="none" stroke="#000" stroke-width="1.25" stroke-linejoin="round"/>
<clipPath id="lf5"><path d="M463.0,294.0 C464.6,287.8 468.8,287.3 472.8,285.0 C476.8,282.7 482.6,281.6 487.0,280.0 C491.4,278.4 495.8,276.9 499.4,275.6 C502.9,274.3 506.7,270.4 508.3,272.0 C509.9,273.6 509.6,280.5 509.0,285.0 C508.4,289.5 507.2,294.8 505.0,299.0 C502.8,303.2 499.8,307.2 496.0,310.0 C492.2,312.8 487.5,314.0 482.0,316.0 C476.5,318.0 466.2,325.7 463.0,322.0 C459.8,318.3 461.4,300.2 463.0,294.0Z"/></clipPath>
<path d="M463.0,294.0 C464.6,287.8 468.8,287.3 472.8,285.0 C476.8,282.7 482.6,281.6 487.0,280.0 C491.4,278.4 495.8,276.9 499.4,275.6 C502.9,274.3 506.7,270.4 508.3,272.0 C509.9,273.6 509.6,280.5 509.0,285.0 C508.4,289.5 507.2,294.8 505.0,299.0 C502.8,303.2 499.8,307.2 496.0,310.0 C492.2,312.8 487.5,314.0 482.0,316.0 C476.5,318.0 466.2,325.7 463.0,322.0 C459.8,318.3 461.4,300.2 463.0,294.0Z" fill="#fff"/>
<g clip-path="url(#lf5)" stroke="#000" stroke-width="1.80" fill="none" stroke-linecap="round">
<path d="M463.0,308.0 C463.6,307.7 465.5,306.7 466.8,306.0 C468.0,305.4 469.3,304.7 470.5,304.1 C471.8,303.4 473.0,302.8 474.3,302.1 C475.6,301.5 476.8,300.8 478.1,300.2 C479.4,299.6 480.8,299.2 482.1,298.6 C483.5,298.1 484.8,297.6 486.2,297.0 C487.5,296.4 488.8,295.9 490.0,295.2 C491.2,294.4 492.2,293.4 493.3,292.6 C494.4,291.7 495.6,290.9 496.6,290.0 C497.6,289.1 498.5,288.1 499.4,287.1 C500.2,286.1 501.3,284.5 501.7,284.0" stroke-width="1.53"/>
<path d="M399.6,341.0 Q417.5,332.4 436.4,319.7"/>
<path d="M407.5,336.9 Q423.9,327.8 441.0,314.5"/>
<path d="M415.4,332.7 Q430.3,323.1 445.7,309.3"/>
<path d="M423.3,328.6 Q436.7,318.5 450.3,304.1"/>
<path d="M431.3,324.5 Q443.1,313.9 454.9,298.9"/>
<path d="M439.2,320.4 Q449.5,309.3 459.5,293.7"/>
<path d="M447.1,316.2 Q455.9,304.7 464.1,288.6"/>
<path d="M455.1,312.1 Q462.3,300.1 468.7,283.4"/>
<path d="M463.0,308.0 Q468.7,295.5 474.1,279.5"/>
<path d="M470.9,303.9 Q475.2,291.0 480.5,277.3"/>
<path d="M479.0,299.9 Q482.7,288.2 487.4,275.8"/>
<path d="M487.5,296.5 Q489.8,284.8 494.7,274.5"/>
<path d="M494.7,291.4 Q496.4,281.0 502.3,273.1"/>
<path d="M500.6,285.4 Q502.5,276.8 508.3,272.0"/>
<path d="M399.6,341.0 Q395.8,342.2 398.2,343.9"/>
<path d="M407.5,336.9 Q405.2,338.6 409.5,340.8"/>
<path d="M415.4,332.7 Q414.7,335.0 420.7,337.7"/>
<path d="M423.3,328.6 Q424.2,331.3 432.0,334.7"/>
<path d="M431.3,324.5 Q433.6,327.7 443.2,331.6"/>
<path d="M439.2,320.4 Q443.1,324.1 454.5,328.5"/>
<path d="M447.1,316.2 Q452.6,320.4 465.7,325.5"/>
<path d="M455.1,312.1 Q462.0,316.8 476.9,322.4"/>
<path d="M463.0,308.0 Q471.5,313.1 487.9,318.7"/>
<path d="M470.9,303.9 Q480.9,309.5 498.3,313.9"/>
<path d="M479.0,299.9 Q490.4,305.5 505.3,304.4"/>
<path d="M487.5,296.5 Q498.1,299.2 508.9,293.2"/>
<path d="M494.7,291.4 Q503.8,291.3 509.6,281.3"/>
<path d="M500.6,285.4 Q507.3,282.3 508.3,272.0"/>
</g>
<path d="M463.0,294.0 C464.6,287.8 468.8,287.3 472.8,285.0 C476.8,282.7 482.6,281.6 487.0,280.0 C491.4,278.4 495.8,276.9 499.4,275.6 C502.9,274.3 506.7,270.4 508.3,272.0 C509.9,273.6 509.6,280.5 509.0,285.0 C508.4,289.5 507.2,294.8 505.0,299.0 C502.8,303.2 499.8,307.2 496.0,310.0 C492.2,312.8 487.5,314.0 482.0,316.0 C476.5,318.0 466.2,325.7 463.0,322.0 C459.8,318.3 461.4,300.2 463.0,294.0Z" fill="none" stroke="#000" stroke-width="1.25" stroke-linejoin="round"/>
<clipPath id="lf6"><path d="M442.0,292.0 C440.0,287.9 433.3,280.5 429.8,277.3 C426.3,274.1 424.6,274.3 421.0,273.0 C417.4,271.7 412.8,270.0 408.4,269.3 C404.0,268.6 399.1,268.7 394.7,268.9 C390.3,269.1 386.2,269.8 382.2,270.7 C378.2,271.6 371.4,272.0 370.7,274.2 C370.0,276.4 374.4,280.9 378.0,284.0 C381.6,287.1 386.7,290.2 392.0,293.0 C397.3,295.8 404.0,299.2 410.0,301.0 C416.0,302.8 422.7,303.8 428.0,304.0 C433.3,304.2 439.7,304.0 442.0,302.0 C444.3,300.0 444.0,296.1 442.0,292.0Z"/></clipPath>
<path d="M442.0,292.0 C440.0,287.9 433.3,280.5 429.8,277.3 C426.3,274.1 424.6,274.3 421.0,273.0 C417.4,271.7 412.8,270.0 408.4,269.3 C404.0,268.6 399.1,268.7 394.7,268.9 C390.3,269.1 386.2,269.8 382.2,270.7 C378.2,271.6 371.4,272.0 370.7,274.2 C370.0,276.4 374.4,280.9 378.0,284.0 C381.6,287.1 386.7,290.2 392.0,293.0 C397.3,295.8 404.0,299.2 410.0,301.0 C416.0,302.8 422.7,303.8 428.0,304.0 C433.3,304.2 439.7,304.0 442.0,302.0 C444.3,300.0 444.0,296.1 442.0,292.0Z" fill="#fff"/>
<g clip-path="url(#lf6)" stroke="#000" stroke-width="1.80" fill="none" stroke-linecap="round">
<path d="M442.0,297.0 C441.3,296.7 439.0,295.9 437.5,295.3 C436.1,294.7 434.6,294.2 433.1,293.6 C431.6,293.0 430.2,292.2 428.6,291.5 C427.1,290.8 425.5,290.0 423.8,289.4 C422.2,288.8 420.4,288.3 418.7,287.8 C416.9,287.3 415.2,286.9 413.4,286.4 C411.7,285.8 410.0,285.1 408.3,284.5 C406.6,283.9 404.9,283.3 403.2,282.8 C401.4,282.3 399.6,282.0 397.9,281.6 C396.2,281.2 394.5,280.6 392.8,280.2 C391.1,279.8 388.6,279.2 387.8,279.0" stroke-width="1.53"/>
<path d="M500.4,319.4 Q495.5,338.2 489.4,364.0"/>
<path d="M493.1,316.6 Q489.1,333.0 484.2,355.9"/>
<path d="M485.8,313.8 Q482.8,327.7 479.0,347.8"/>
<path d="M478.5,311.0 Q476.5,322.5 473.8,339.7"/>
<path d="M471.2,308.2 Q470.1,317.2 468.5,331.6"/>
<path d="M463.9,305.4 Q463.8,312.0 463.3,323.5"/>
<path d="M456.6,302.6 Q457.4,306.8 458.1,315.4"/>
<path d="M449.3,299.8 Q451.1,301.5 452.9,307.3"/>
<path d="M442.0,297.0 Q444.7,296.3 447.6,299.2"/>
<path d="M434.7,294.2 Q438.4,291.0 442.4,291.1"/>
<path d="M427.4,290.8 Q432.1,285.8 437.2,283.1"/>
<path d="M419.1,287.9 Q424.9,281.0 432.0,275.1"/>
<path d="M410.6,285.3 Q416.6,277.9 424.7,270.1"/>
<path d="M402.1,282.6 Q408.1,275.2 416.3,267.0"/>
<path d="M393.6,280.5 Q399.3,274.0 407.6,265.2"/>
<path d="M385.4,278.5 Q390.7,273.3 398.5,265.5"/>
<path d="M377.7,276.5 Q382.1,273.3 389.5,267.1"/>
<path d="M370.7,274.2 Q374.1,273.9 380.4,269.8"/>
<path d="M370.7,274.2 Q370.7,274.2 371.4,273.9"/>
<path d="M500.4,319.4 Q500.4,302.5 495.1,289.4"/>
<path d="M493.1,316.6 Q492.1,302.2 485.7,291.9"/>
<path d="M485.8,313.8 Q483.8,301.8 476.3,294.4"/>
<path d="M478.5,311.0 Q475.6,301.5 467.0,296.9"/>
<path d="M471.2,308.2 Q467.3,301.1 457.6,299.4"/>
<path d="M463.9,305.4 Q459.1,300.7 448.2,301.9"/>
<path d="M456.6,302.6 Q450.8,300.4 438.8,304.3"/>
<path d="M449.3,299.8 Q442.5,300.0 429.4,306.8"/>
<path d="M442.0,297.0 Q434.3,299.7 420.1,306.8"/>
<path d="M434.7,294.2 Q426.0,298.5 411.1,305.7"/>
<path d="M427.4,290.8 Q417.4,296.4 402.8,302.5"/>
<path d="M419.1,287.9 Q408.8,294.1 394.7,298.5"/>
<path d="M410.6,285.3 Q400.5,290.7 387.0,293.5"/>
<path d="M402.1,282.6 Q392.2,287.6 379.6,287.7"/>
<path d="M393.6,280.5 Q384.4,283.9 373.9,279.9"/>
<path d="M385.4,278.5 Q377.1,279.8 370.7,274.2"/>
<path d="M377.7,276.5 Q371.1,274.5 370.7,274.2"/>
</g>
<path d="M442.0,292.0 C440.0,287.9 433.3,280.5 429.8,277.3 C426.3,274.1 424.6,274.3 421.0,273.0 C417.4,271.7 412.8,270.0 408.4,269.3 C404.0,268.6 399.1,268.7 394.7,268.9 C390.3,269.1 386.2,269.8 382.2,270.7 C378.2,271.6 371.4,272.0 370.7,274.2 C370.0,276.4 374.4,280.9 378.0,284.0 C381.6,287.1 386.7,290.2 392.0,293.0 C397.3,295.8 404.0,299.2 410.0,301.0 C416.0,302.8 422.7,303.8 428.0,304.0 C433.3,304.2 439.7,304.0 442.0,302.0 C444.3,300.0 444.0,296.1 442.0,292.0Z" fill="none" stroke="#000" stroke-width="1.25" stroke-linejoin="round"/>
<clipPath id="lf7"><path d="M422.0,298.0 C417.5,294.8 402.2,291.3 395.0,289.0 C387.8,286.7 382.9,285.3 378.7,284.0 C374.5,282.7 373.1,281.6 369.8,281.0 C366.5,280.4 362.6,280.2 359.0,280.4 C355.4,280.6 351.9,281.1 348.4,282.2 C344.9,283.2 341.5,285.1 337.8,286.7 C334.1,288.3 326.8,290.1 326.2,292.0 C325.6,293.9 331.1,296.0 334.2,298.2 C337.3,300.4 341.4,303.4 345.0,305.3 C348.6,307.2 352.1,308.5 355.6,309.8 C359.1,311.1 362.4,312.7 366.2,313.3 C370.0,313.9 373.4,313.8 378.7,313.6 C384.0,313.4 390.8,312.9 398.0,312.0 C405.2,311.1 418.0,310.3 422.0,308.0 C426.0,305.7 426.5,301.2 422.0,298.0Z"/></clipPath>
<path d="M422.0,298.0 C417.5,294.8 402.2,291.3 395.0,289.0 C387.8,286.7 382.9,285.3 378.7,284.0 C374.5,282.7 373.1,281.6 369.8,281.0 C366.5,280.4 362.6,280.2 359.0,280.4 C355.4,280.6 351.9,281.1 348.4,282.2 C344.9,283.2 341.5,285.1 337.8,286.7 C334.1,288.3 326.8,290.1 326.2,292.0 C325.6,293.9 331.1,296.0 334.2,298.2 C337.3,300.4 341.4,303.4 345.0,305.3 C348.6,307.2 352.1,308.5 355.6,309.8 C359.1,311.1 362.4,312.7 366.2,313.3 C370.0,313.9 373.4,313.8 378.7,313.6 C384.0,313.4 390.8,312.9 398.0,312.0 C405.2,311.1 418.0,310.3 422.0,308.0 C426.0,305.7 426.5,301.2 422.0,298.0Z" fill="#fff"/>
<g clip-path="url(#lf7)" stroke="#000" stroke-width="1.80" fill="none" stroke-linecap="round">
<path d="M422.0,303.0 C420.9,302.9 417.6,302.7 415.4,302.5 C413.1,302.3 410.9,302.1 408.7,302.0 C406.5,301.8 404.3,301.7 402.1,301.5 C399.8,301.3 397.6,301.0 395.4,300.8 C393.2,300.6 390.9,300.3 388.7,300.1 C386.5,299.8 384.2,299.7 382.0,299.4 C379.7,299.1 377.5,298.7 375.3,298.4 C373.0,298.0 370.8,297.6 368.6,297.2 C366.4,296.8 364.1,296.4 361.9,296.0 C359.7,295.7 357.4,295.3 355.2,295.0 C353.0,294.7 349.8,294.3 348.7,294.2" stroke-width="1.53"/>
<path d="M487.4,308.0 Q491.0,315.8 496.6,327.3"/>
<path d="M479.2,307.4 Q483.0,314.0 488.7,324.0"/>
<path d="M471.0,306.8 Q474.9,312.1 480.8,320.8"/>
<path d="M462.9,306.1 Q466.9,310.3 472.9,317.5"/>
<path d="M454.7,305.5 Q458.8,308.4 465.0,314.2"/>
<path d="M446.5,304.9 Q450.8,306.6 457.1,311.0"/>
<path d="M438.3,304.3 Q442.7,304.8 449.2,307.7"/>
<path d="M430.2,303.6 Q434.7,302.9 441.3,304.5"/>
<path d="M422.0,303.0 Q426.6,301.1 433.4,301.2"/>
<path d="M413.8,302.4 Q418.6,299.2 425.5,297.9"/>
<path d="M405.7,301.7 Q410.5,297.4 417.6,294.7"/>
<path d="M397.5,301.1 Q402.5,295.5 409.7,291.4"/>
<path d="M389.2,300.1 Q394.4,293.6 401.8,288.1"/>
<path d="M381.0,299.3 Q386.3,291.8 393.9,285.0"/>
<path d="M372.8,297.9 Q378.2,289.9 385.9,282.1"/>
<path d="M364.5,296.5 Q370.1,287.7 378.0,279.1"/>
<path d="M356.3,295.1 Q361.8,286.7 370.1,276.2"/>
<path d="M348.3,294.2 Q353.6,286.6 361.6,276.0"/>
<path d="M340.7,293.5 Q345.6,287.5 353.3,277.5"/>
<path d="M333.4,292.9 Q338.0,289.2 345.2,280.6"/>
<path d="M326.2,292.0 Q330.5,291.0 337.4,285.1"/>
<path d="M326.2,292.0 Q326.2,292.0 329.6,289.9"/>
<path d="M326.2,292.0 Q326.2,292.0 326.2,292.0"/>
<path d="M487.4,308.0 Q478.0,302.0 463.2,299.7"/>
<path d="M479.2,307.4 Q469.7,302.6 454.7,301.7"/>
<path d="M471.0,306.8 Q461.4,303.2 446.3,303.7"/>
<path d="M462.9,306.1 Q453.1,303.8 437.9,305.7"/>
<path d="M454.7,305.5 Q444.8,304.4 429.4,307.7"/>
<path d="M446.5,304.9 Q436.5,305.0 421.0,309.7"/>
<path d="M438.3,304.3 Q428.2,305.6 412.5,311.7"/>
<path d="M430.2,303.6 Q419.9,306.1 404.1,313.7"/>
<path d="M422.0,303.0 Q411.6,306.7 395.6,315.5"/>
<path d="M413.8,302.4 Q403.4,307.3 387.1,316.7"/>
<path d="M405.7,301.7 Q395.0,307.7 378.6,317.9"/>
<path d="M397.5,301.1 Q386.7,307.8 370.0,318.1"/>
<path d="M389.2,300.1 Q378.3,307.7 361.7,316.6"/>
<path d="M381.0,299.3 Q369.9,307.1 353.8,313.4"/>
<path d="M372.8,297.9 Q361.7,305.4 346.0,309.4"/>
<path d="M364.5,296.5 Q353.6,303.2 338.9,303.8"/>
<path d="M356.3,295.1 Q345.7,300.8 332.0,297.7"/>
<path d="M348.3,294.2 Q338.5,297.8 326.2,292.0"/>
<path d="M340.7,293.5 Q331.4,294.6 326.2,292.0"/>
<path d="M333.4,292.9 Q326.2,292.0 326.2,292.0"/>
</g>
<path d="M422.0,298.0 C417.5,294.8 402.2,291.3 395.0,289.0 C387.8,286.7 382.9,285.3 378.7,284.0 C374.5,282.7 373.1,281.6 369.8,281.0 C366.5,280.4 362.6,280.2 359.0,280.4 C355.4,280.6 351.9,281.1 348.4,282.2 C344.9,283.2 341.5,285.1 337.8,286.7 C334.1,288.3 326.8,290.1 326.2,292.0 C325.6,293.9 331.1,296.0 334.2,298.2 C337.3,300.4 341.4,303.4 345.0,305.3 C348.6,307.2 352.1,308.5 355.6,309.8 C359.1,311.1 362.4,312.7 366.2,313.3 C370.0,313.9 373.4,313.8 378.7,313.6 C384.0,313.4 390.8,312.9 398.0,312.0 C405.2,311.1 418.0,310.3 422.0,308.0 C426.0,305.7 426.5,301.2 422.0,298.0Z" fill="none" stroke="#000" stroke-width="1.25" stroke-linejoin="round"/>
<clipPath id="lf8"><path d="M494.0,316.0 C495.3,312.0 499.5,300.7 502.0,296.0 C504.5,291.3 505.7,289.8 508.9,288.0 C512.1,286.2 516.8,285.7 521.3,285.1 C525.8,284.5 531.1,283.9 535.6,284.2 C540.1,284.5 544.1,285.9 548.0,286.9 C551.9,287.9 558.4,289.1 558.7,290.4 C559.0,291.7 552.5,293.1 549.8,294.9 C547.1,296.7 545.1,299.5 542.7,301.1 C540.3,302.7 539.4,303.1 535.6,304.7 C531.8,306.3 525.1,308.8 520.0,311.0 C514.9,313.2 509.3,316.5 505.0,318.0 C500.7,319.5 495.8,320.3 494.0,320.0 C492.2,319.7 492.7,320.0 494.0,316.0Z"/></clipPath>
<path d="M494.0,316.0 C495.3,312.0 499.5,300.7 502.0,296.0 C504.5,291.3 505.7,289.8 508.9,288.0 C512.1,286.2 516.8,285.7 521.3,285.1 C525.8,284.5 531.1,283.9 535.6,284.2 C540.1,284.5 544.1,285.9 548.0,286.9 C551.9,287.9 558.4,289.1 558.7,290.4 C559.0,291.7 552.5,293.1 549.8,294.9 C547.1,296.7 545.1,299.5 542.7,301.1 C540.3,302.7 539.4,303.1 535.6,304.7 C531.8,306.3 525.1,308.8 520.0,311.0 C514.9,313.2 509.3,316.5 505.0,318.0 C500.7,319.5 495.8,320.3 494.0,320.0 C492.2,319.7 492.7,320.0 494.0,316.0Z" fill="#fff"/>
<g clip-path="url(#lf8)" stroke="#000" stroke-width="1.80" fill="none" stroke-linecap="round">
<path d="M494.0,318.0 C494.6,317.5 496.3,316.0 497.4,314.9 C498.6,313.9 499.8,313.0 500.9,311.9 C502.0,310.8 503.1,309.6 504.2,308.4 C505.3,307.3 506.4,306.0 507.6,304.9 C508.8,303.7 510.2,302.7 511.6,301.7 C513.0,300.7 514.4,299.7 516.0,299.0 C517.5,298.3 519.3,298.0 521.0,297.5 C522.7,297.0 524.3,296.4 526.0,295.9 C527.7,295.5 529.4,295.2 531.1,294.8 C532.7,294.5 534.4,294.0 536.1,293.6 C537.7,293.2 540.1,292.8 540.9,292.6" stroke-width="1.53"/>
<path d="M443.2,363.0 Q460.1,372.9 477.1,374.4"/>
<path d="M449.5,357.4 Q465.0,364.8 480.2,363.6"/>
<path d="M455.9,351.8 Q469.8,356.8 483.3,352.7"/>
<path d="M462.2,346.1 Q474.7,348.8 486.4,341.9"/>
<path d="M468.6,340.5 Q479.5,340.7 489.5,331.0"/>
<path d="M474.9,334.9 Q484.4,332.7 492.6,320.2"/>
<path d="M481.3,329.3 Q489.3,324.6 495.7,309.3"/>
<path d="M487.6,323.6 Q494.1,316.6 498.9,298.6"/>
<path d="M494.0,318.0 Q499.0,308.6 503.7,289.0"/>
<path d="M500.4,312.4 Q503.7,300.2 512.1,283.5"/>
<path d="M506.4,305.9 Q510.7,293.1 522.6,281.8"/>
<path d="M513.8,300.0 Q520.2,290.2 533.3,281.6"/>
<path d="M522.9,296.9 Q530.1,288.6 543.9,284.5"/>
<path d="M532.2,294.6 Q539.9,287.9 554.2,288.5"/>
<path d="M443.2,363.0 Q439.3,341.6 441.8,322.8"/>
<path d="M449.5,357.4 Q447.1,338.4 451.4,322.4"/>
<path d="M455.9,351.8 Q455.0,335.2 461.0,322.0"/>
<path d="M462.2,346.1 Q462.8,332.0 470.6,321.6"/>
<path d="M468.6,340.5 Q470.6,328.8 480.2,321.2"/>
<path d="M474.9,334.9 Q478.5,325.6 489.8,320.8"/>
<path d="M481.3,329.3 Q486.3,322.3 499.4,320.4"/>
<path d="M487.6,323.6 Q494.2,319.1 508.7,319.2"/>
<path d="M494.0,318.0 Q502.0,315.9 517.3,316.1"/>
<path d="M500.4,312.4 Q509.4,311.3 525.5,312.8"/>
<path d="M506.4,305.9 Q517.3,306.7 533.6,309.2"/>
<path d="M513.8,300.0 Q525.9,303.4 541.4,304.9"/>
<path d="M522.9,296.9 Q534.6,300.5 548.0,298.5"/>
<path d="M532.2,294.6 Q542.9,297.0 555.3,292.7"/>
</g>
<path d="M494.0,316.0 C495.3,312.0 499.5,300.7 502.0,296.0 C504.5,291.3 505.7,289.8 508.9,288.0 C512.1,286.2 516.8,285.7 521.3,285.1 C525.8,284.5 531.1,283.9 535.6,284.2 C540.1,284.5 544.1,285.9 548.0,286.9 C551.9,287.9 558.4,289.1 558.7,290.4 C559.0,291.7 552.5,293.1 549.8,294.9 C547.1,296.7 545.1,299.5 542.7,301.1 C540.3,302.7 539.4,303.1 535.6,304.7 C531.8,306.3 525.1,308.8 520.0,311.0 C514.9,313.2 509.3,316.5 505.0,318.0 C500.7,319.5 495.8,320.3 494.0,320.0 C492.2,319.7 492.7,320.0 494.0,316.0Z" fill="none" stroke="#000" stroke-width="1.25" stroke-linejoin="round"/>
<clipPath id="lf9"><path d="M466.0,320.0 C471.7,315.5 490.7,317.0 500.0,318.0 C509.3,319.0 515.8,322.3 522.0,326.0 C528.2,329.7 535.5,337.2 537.0,340.0 C538.5,342.8 534.0,341.4 531.0,343.0 C528.0,344.6 522.5,347.9 518.7,349.6 C514.9,351.3 511.9,352.7 508.0,353.0 C504.1,353.3 500.1,352.5 495.6,351.5 C491.2,350.5 486.2,348.1 481.3,347.0 C476.4,345.9 468.6,349.5 466.0,345.0 C463.4,340.5 460.3,324.5 466.0,320.0Z"/></clipPath>
<path d="M466.0,320.0 C471.7,315.5 490.7,317.0 500.0,318.0 C509.3,319.0 515.8,322.3 522.0,326.0 C528.2,329.7 535.5,337.2 537.0,340.0 C538.5,342.8 534.0,341.4 531.0,343.0 C528.0,344.6 522.5,347.9 518.7,349.6 C514.9,351.3 511.9,352.7 508.0,353.0 C504.1,353.3 500.1,352.5 495.6,351.5 C491.2,350.5 486.2,348.1 481.3,347.0 C476.4,345.9 468.6,349.5 466.0,345.0 C463.4,340.5 460.3,324.5 466.0,320.0Z" fill="#fff"/>
<g clip-path="url(#lf9)" stroke="#000" stroke-width="1.80" fill="none" stroke-linecap="round">
<path d="M466.0,332.5 C466.9,332.5 469.4,332.6 471.2,332.7 C472.9,332.7 474.6,332.8 476.3,332.8 C478.0,332.9 479.8,332.9 481.5,333.0 C483.2,333.1 484.8,333.4 486.5,333.6 C488.2,333.8 489.9,334.0 491.6,334.2 C493.3,334.4 495.0,334.6 496.6,334.8 C498.3,335.0 500.0,335.2 501.7,335.6 C503.4,335.9 505.1,336.5 506.7,336.8 C508.4,337.1 510.0,337.3 511.7,337.4 C513.3,337.5 514.9,337.5 516.6,337.5 C518.2,337.6 520.5,337.6 521.3,337.6" stroke-width="1.53"/>
<path d="M390.0,329.9 Q398.8,326.5 412.7,320.8"/>
<path d="M399.5,330.3 Q408.4,326.3 422.5,320.0"/>
<path d="M409.0,330.6 Q418.0,326.1 432.3,319.1"/>
<path d="M418.5,330.9 Q427.7,325.9 442.1,318.3"/>
<path d="M428.0,331.2 Q437.3,325.6 451.9,317.5"/>
<path d="M437.5,331.5 Q447.0,325.4 461.7,316.6"/>
<path d="M447.0,331.9 Q456.6,325.2 471.5,315.8"/>
<path d="M456.5,332.2 Q466.2,325.0 481.3,314.9"/>
<path d="M466.0,332.5 Q475.9,324.8 491.1,313.9"/>
<path d="M475.5,332.8 Q485.5,324.7 500.9,313.2"/>
<path d="M484.9,333.4 Q495.1,324.8 510.1,316.8"/>
<path d="M494.3,334.5 Q504.4,326.3 519.3,321.1"/>
<path d="M503.6,336.0 Q513.6,328.8 527.0,328.1"/>
<path d="M512.7,337.4 Q522.5,331.2 533.9,336.4"/>
<path d="M390.0,329.9 Q400.7,334.0 415.9,340.7"/>
<path d="M399.5,330.3 Q410.0,334.9 425.1,342.2"/>
<path d="M409.0,330.6 Q419.4,335.7 434.3,343.7"/>
<path d="M418.5,330.9 Q428.8,336.6 443.5,345.1"/>
<path d="M428.0,331.2 Q438.1,337.5 452.7,346.6"/>
<path d="M437.5,331.5 Q447.5,338.3 462.0,348.1"/>
<path d="M447.0,331.9 Q456.9,339.2 471.2,349.6"/>
<path d="M456.5,332.2 Q466.2,340.0 480.4,351.1"/>
<path d="M466.0,332.5 Q475.6,340.9 489.2,354.2"/>
<path d="M475.5,332.8 Q484.8,342.2 498.1,356.9"/>
<path d="M484.9,333.4 Q493.9,344.3 507.4,357.6"/>
<path d="M494.3,334.5 Q503.2,345.8 516.3,354.1"/>
<path d="M503.6,336.0 Q512.3,346.0 524.8,348.6"/>
<path d="M512.7,337.4 Q521.1,344.2 533.2,342.6"/>
</g>
<path d="M466.0,320.0 C471.7,315.5 490.7,317.0 500.0,318.0 C509.3,319.0 515.8,322.3 522.0,326.0 C528.2,329.7 535.5,337.2 537.0,340.0 C538.5,342.8 534.0,341.4 531.0,343.0 C528.0,344.6 522.5,347.9 518.7,349.6 C514.9,351.3 511.9,352.7 508.0,353.0 C504.1,353.3 500.1,352.5 495.6,351.5 C491.2,350.5 486.2,348.1 481.3,347.0 C476.4,345.9 468.6,349.5 466.0,345.0 C463.4,340.5 460.3,324.5 466.0,320.0Z" fill="none" stroke="#000" stroke-width="1.25" stroke-linejoin="round"/>
<clipPath id="lf10"><path d="M470.0,320.0 C475.0,316.7 491.7,316.0 500.0,314.0 C508.3,312.0 514.1,309.7 520.0,308.0 C525.9,306.3 530.6,304.8 535.6,303.8 C540.6,302.9 545.4,302.0 549.8,302.3 C554.2,302.6 558.5,303.5 562.2,305.4 C565.9,307.3 571.1,310.8 572.0,313.6 C572.9,316.5 570.1,319.5 567.6,322.5 C565.1,325.5 560.5,329.1 556.9,331.5 C553.3,333.9 549.8,335.8 546.2,337.0 C542.7,338.2 539.5,338.8 535.6,339.0 C531.7,339.2 528.9,338.7 523.0,338.0 C517.1,337.3 508.8,335.7 500.0,335.0 C491.2,334.3 475.0,336.5 470.0,334.0 C465.0,331.5 465.0,323.3 470.0,320.0Z"/></clipPath>
<path d="M470.0,320.0 C475.0,316.7 491.7,316.0 500.0,314.0 C508.3,312.0 514.1,309.7 520.0,308.0 C525.9,306.3 530.6,304.8 535.6,303.8 C540.6,302.9 545.4,302.0 549.8,302.3 C554.2,302.6 558.5,303.5 562.2,305.4 C565.9,307.3 571.1,310.8 572.0,313.6 C572.9,316.5 570.1,319.5 567.6,322.5 C565.1,325.5 560.5,329.1 556.9,331.5 C553.3,333.9 549.8,335.8 546.2,337.0 C542.7,338.2 539.5,338.8 535.6,339.0 C531.7,339.2 528.9,338.7 523.0,338.0 C517.1,337.3 508.8,335.7 500.0,335.0 C491.2,334.3 475.0,336.5 470.0,334.0 C465.0,331.5 465.0,323.3 470.0,320.0Z" fill="#fff"/>
<g clip-path="url(#lf10)" stroke="#000" stroke-width="1.80" fill="none" stroke-linecap="round">
<path d="M470.0,327.0 C471.2,326.9 474.9,326.6 477.4,326.4 C479.8,326.2 482.3,326.0 484.8,325.8 C487.2,325.6 489.7,325.4 492.2,325.2 C494.6,325.0 497.1,324.9 499.5,324.7 C502.0,324.5 504.4,324.4 506.8,324.2 C509.3,324.0 511.7,323.8 514.1,323.6 C516.5,323.4 518.9,323.3 521.4,323.1 C523.8,322.9 526.3,322.7 528.7,322.4 C531.1,322.1 533.6,321.8 536.0,321.4 C538.4,321.0 541.0,320.7 543.3,320.2 C545.7,319.6 549.2,318.4 550.4,318.1" stroke-width="1.53"/>
<path d="M397.4,332.8 Q412.5,331.5 433.8,326.5"/>
<path d="M406.4,332.1 Q421.4,330.1 442.5,324.4"/>
<path d="M415.5,331.3 Q430.3,328.8 451.2,322.4"/>
<path d="M424.6,330.6 Q439.2,327.5 459.9,320.3"/>
<path d="M433.7,329.9 Q448.1,326.1 468.6,318.2"/>
<path d="M442.8,329.2 Q457.0,324.8 477.3,316.2"/>
<path d="M451.8,328.4 Q465.9,323.4 486.0,314.1"/>
<path d="M460.9,327.7 Q474.8,322.1 494.7,312.0"/>
<path d="M470.0,327.0 Q483.7,320.7 503.3,309.5"/>
<path d="M479.1,326.3 Q492.6,319.4 511.8,306.3"/>
<path d="M488.2,325.6 Q501.4,318.0 520.2,303.2"/>
<path d="M497.2,324.8 Q510.2,316.2 528.8,300.4"/>
<path d="M506.2,324.2 Q518.9,314.4 537.4,298.4"/>
<path d="M515.2,323.6 Q527.7,312.7 546.4,297.9"/>
<path d="M524.1,322.8 Q536.4,310.7 555.3,300.0"/>
<path d="M533.1,322.0 Q545.3,309.4 563.6,304.5"/>
<path d="M542.1,320.3 Q554.0,308.7 570.8,312.3"/>
<path d="M397.4,332.8 Q410.2,331.9 430.6,333.5"/>
<path d="M406.4,332.1 Q419.4,331.8 440.1,334.1"/>
<path d="M415.5,331.3 Q428.7,331.7 449.6,334.8"/>
<path d="M424.6,330.6 Q437.9,331.6 459.0,335.4"/>
<path d="M433.7,329.9 Q447.2,331.4 468.5,336.0"/>
<path d="M442.8,329.2 Q456.4,331.3 478.0,336.6"/>
<path d="M451.8,328.4 Q465.7,331.2 487.4,337.2"/>
<path d="M460.9,327.7 Q475.0,331.1 496.9,337.9"/>
<path d="M470.0,327.0 Q484.2,331.0 506.3,339.2"/>
<path d="M479.1,326.3 Q493.5,330.9 515.7,341.0"/>
<path d="M488.2,325.6 Q502.7,331.1 525.1,342.7"/>
<path d="M497.2,324.8 Q511.9,331.5 534.6,343.9"/>
<path d="M506.2,324.2 Q521.0,332.0 543.9,342.7"/>
<path d="M515.2,323.6 Q530.2,332.1 552.5,338.9"/>
<path d="M524.1,322.8 Q539.4,331.3 560.3,333.0"/>
<path d="M533.1,322.0 Q548.3,328.9 567.3,325.5"/>
<path d="M542.1,320.3 Q556.6,325.4 571.4,315.3"/>
</g>
<path d="M470.0,320.0 C475.0,316.7 491.7,316.0 500.0,314.0 C508.3,312.0 514.1,309.7 520.0,308.0 C525.9,306.3 530.6,304.8 535.6,303.8 C540.6,302.9 545.4,302.0 549.8,302.3 C554.2,302.6 558.5,303.5 562.2,305.4 C565.9,307.3 571.1,310.8 572.0,313.6 C572.9,316.5 570.1,319.5 567.6,322.5 C565.1,325.5 560.5,329.1 556.9,331.5 C553.3,333.9 549.8,335.8 546.2,337.0 C542.7,338.2 539.5,338.8 535.6,339.0 C531.7,339.2 528.9,338.7 523.0,338.0 C517.1,337.3 508.8,335.7 500.0,335.0 C491.2,334.3 475.0,336.5 470.0,334.0 C465.0,331.5 465.0,323.3 470.0,320.0Z" fill="none" stroke="#000" stroke-width="1.25" stroke-linejoin="round"/>
<clipPath id="lf11"><path d="M436.0,320.0 C431.7,317.7 417.5,315.4 410.0,314.0 C402.5,312.6 397.1,312.0 391.0,311.6 C384.9,311.2 378.3,311.0 373.3,311.6 C368.3,312.2 364.8,313.6 360.9,315.1 C357.0,316.6 354.0,318.0 350.2,320.4 C346.4,322.8 337.8,327.4 337.8,329.3 C337.8,331.2 345.8,331.1 350.2,332.0 C354.6,332.9 359.6,334.1 364.4,334.7 C369.1,335.3 372.8,335.6 378.7,335.6 C384.6,335.6 393.1,335.3 400.0,334.7 C406.9,334.1 414.0,333.1 420.0,332.0 C426.0,330.9 433.3,330.0 436.0,328.0 C438.7,326.0 440.3,322.3 436.0,320.0Z"/></clipPath>
<path d="M436.0,320.0 C431.7,317.7 417.5,315.4 410.0,314.0 C402.5,312.6 397.1,312.0 391.0,311.6 C384.9,311.2 378.3,311.0 373.3,311.6 C368.3,312.2 364.8,313.6 360.9,315.1 C357.0,316.6 354.0,318.0 350.2,320.4 C346.4,322.8 337.8,327.4 337.8,329.3 C337.8,331.2 345.8,331.1 350.2,332.0 C354.6,332.9 359.6,334.1 364.4,334.7 C369.1,335.3 372.8,335.6 378.7,335.6 C384.6,335.6 393.1,335.3 400.0,334.7 C406.9,334.1 414.0,333.1 420.0,332.0 C426.0,330.9 433.3,330.0 436.0,328.0 C438.7,326.0 440.3,322.3 436.0,320.0Z" fill="#fff"/>
<g clip-path="url(#lf11)" stroke="#000" stroke-width="1.80" fill="none" stroke-linecap="round">
<path d="M436.0,324.0 C434.9,324.0 431.5,324.0 429.3,324.0 C427.1,324.0 424.9,324.1 422.6,324.1 C420.4,324.0 418.1,324.0 415.9,323.9 C413.6,323.8 411.4,323.7 409.1,323.6 C406.8,323.6 404.6,323.6 402.3,323.6 C400.0,323.6 397.7,323.5 395.4,323.5 C393.2,323.4 390.9,323.4 388.6,323.4 C386.3,323.4 384.0,323.5 381.7,323.5 C379.4,323.5 377.1,323.4 374.8,323.5 C372.5,323.6 370.3,324.0 368.1,324.2 C365.8,324.4 362.5,324.8 361.4,324.9" stroke-width="1.53"/>
<path d="M501.8,323.7 Q507.5,331.5 516.0,342.7"/>
<path d="M493.6,323.8 Q499.2,330.3 507.5,340.2"/>
<path d="M485.4,323.8 Q490.8,329.2 499.0,337.7"/>
<path d="M477.1,323.8 Q482.5,328.0 490.5,335.1"/>
<path d="M468.9,323.9 Q474.2,326.9 482.1,332.6"/>
<path d="M460.7,323.9 Q465.8,325.7 473.6,330.1"/>
<path d="M452.5,323.9 Q457.5,324.6 465.1,327.5"/>
<path d="M444.2,324.0 Q449.1,323.4 456.7,325.0"/>
<path d="M436.0,324.0 Q440.8,322.3 448.2,322.4"/>
<path d="M427.8,324.0 Q432.5,321.1 439.7,319.9"/>
<path d="M419.5,324.1 Q424.1,320.0 431.3,317.4"/>
<path d="M411.2,323.6 Q415.8,318.7 422.8,314.8"/>
<path d="M402.8,323.6 Q407.4,317.6 414.3,312.4"/>
<path d="M394.4,323.4 Q398.9,317.0 405.8,310.5"/>
<path d="M386.0,323.4 Q390.3,316.3 397.2,309.1"/>
<path d="M377.5,323.6 Q381.8,316.4 388.6,308.1"/>
<path d="M369.2,324.1 Q373.2,316.5 379.9,308.0"/>
<path d="M360.9,325.0 Q364.9,318.3 371.3,308.6"/>
<path d="M353.0,326.1 Q356.9,320.6 362.9,311.4"/>
<path d="M345.4,327.7 Q349.2,323.5 355.1,315.5"/>
<path d="M337.8,329.3 Q342.0,327.2 347.7,320.6"/>
<path d="M337.8,329.3 Q337.8,329.3 340.8,326.6"/>
<path d="M337.8,329.3 Q337.8,329.3 337.8,329.3"/>
<path d="M501.8,323.7 Q490.8,318.2 475.0,316.5"/>
<path d="M493.6,323.8 Q482.7,319.4 467.0,319.1"/>
<path d="M485.4,323.8 Q474.6,320.6 459.0,321.7"/>
<path d="M477.1,323.8 Q466.5,321.8 451.0,324.3"/>
<path d="M468.9,323.9 Q458.3,323.0 443.0,326.9"/>
<path d="M460.7,323.9 Q450.2,324.3 435.0,329.5"/>
<path d="M452.5,323.9 Q442.1,325.5 427.1,332.1"/>
<path d="M444.2,324.0 Q434.0,326.7 419.0,334.6"/>
<path d="M436.0,324.0 Q425.9,327.9 410.9,336.1"/>
<path d="M427.8,324.0 Q417.7,329.0 402.7,337.6"/>
<path d="M419.5,324.1 Q409.5,329.5 394.5,338.4"/>
<path d="M411.2,323.6 Q401.2,330.2 386.3,338.8"/>
<path d="M402.8,323.6 Q392.8,330.3 378.0,339.1"/>
<path d="M394.4,323.4 Q384.5,330.6 369.8,338.3"/>
<path d="M386.0,323.4 Q376.1,330.7 361.5,336.8"/>
<path d="M377.5,323.6 Q367.9,330.7 353.3,334.4"/>
<path d="M369.2,324.1 Q359.7,330.4 345.1,331.7"/>
<path d="M360.9,325.0 Q351.6,330.0 337.8,329.3"/>
<path d="M353.0,326.1 Q343.7,329.6 337.8,329.3"/>
<path d="M345.4,327.7 Q337.8,329.3 337.8,329.3"/>
</g>
<path d="M436.0,320.0 C431.7,317.7 417.5,315.4 410.0,314.0 C402.5,312.6 397.1,312.0 391.0,311.6 C384.9,311.2 378.3,311.0 373.3,311.6 C368.3,312.2 364.8,313.6 360.9,315.1 C357.0,316.6 354.0,318.0 350.2,320.4 C346.4,322.8 337.8,327.4 337.8,329.3 C337.8,331.2 345.8,331.1 350.2,332.0 C354.6,332.9 359.6,334.1 364.4,334.7 C369.1,335.3 372.8,335.6 378.7,335.6 C384.6,335.6 393.1,335.3 400.0,334.7 C406.9,334.1 414.0,333.1 420.0,332.0 C426.0,330.9 433.3,330.0 436.0,328.0 C438.7,326.0 440.3,322.3 436.0,320.0Z" fill="none" stroke="#000" stroke-width="1.25" stroke-linejoin="round"/>
<clipPath id="lf12"><path d="M442.0,345.0 C437.4,342.5 421.9,342.4 414.4,341.0 C406.8,339.6 403.4,337.0 396.7,336.7 C390.0,336.4 381.4,336.6 374.4,339.0 C367.3,341.4 359.8,345.3 354.4,351.0 C349.0,356.7 340.7,371.1 342.2,373.3 C343.7,375.5 356.8,365.1 363.3,364.4 C369.8,363.7 374.7,367.9 381.0,369.0 C387.3,370.1 394.7,371.5 401.0,371.0 C407.3,370.5 412.2,368.5 419.0,366.0 C425.8,363.5 438.2,359.5 442.0,356.0 C445.8,352.5 446.6,347.5 442.0,345.0Z"/></clipPath>
<path d="M442.0,345.0 C437.4,342.5 421.9,342.4 414.4,341.0 C406.8,339.6 403.4,337.0 396.7,336.7 C390.0,336.4 381.4,336.6 374.4,339.0 C367.3,341.4 359.8,345.3 354.4,351.0 C349.0,356.7 340.7,371.1 342.2,373.3 C343.7,375.5 356.8,365.1 363.3,364.4 C369.8,363.7 374.7,367.9 381.0,369.0 C387.3,370.1 394.7,371.5 401.0,371.0 C407.3,370.5 412.2,368.5 419.0,366.0 C425.8,363.5 438.2,359.5 442.0,356.0 C445.8,352.5 446.6,347.5 442.0,345.0Z" fill="#fff"/>
<g clip-path="url(#lf12)" stroke="#000" stroke-width="1.80" fill="none" stroke-linecap="round">
<path d="M442.0,350.5 C440.8,350.6 437.2,351.1 434.8,351.3 C432.4,351.6 430.0,351.9 427.6,352.2 C425.2,352.5 422.8,352.8 420.4,353.0 C418.0,353.3 415.6,353.4 413.2,353.5 C410.7,353.6 408.3,353.5 405.9,353.5 C403.4,353.6 401.0,353.7 398.6,353.8 C396.1,353.9 393.6,354.0 391.1,354.0 C388.6,354.1 386.0,354.0 383.6,354.1 C381.1,354.2 378.6,354.4 376.3,354.7 C373.9,355.1 371.7,355.5 369.4,355.9 C367.1,356.3 363.7,356.9 362.6,357.0" stroke-width="1.53"/>
<path d="M507.4,342.8 Q516.4,350.6 529.5,362.2"/>
<path d="M499.2,343.8 Q507.7,350.2 520.4,360.2"/>
<path d="M491.0,344.7 Q499.1,349.8 511.2,358.3"/>
<path d="M482.8,345.7 Q490.5,349.4 502.1,356.3"/>
<path d="M474.7,346.6 Q481.9,349.0 492.9,354.3"/>
<path d="M466.5,347.6 Q473.3,348.6 483.7,352.3"/>
<path d="M458.3,348.6 Q464.6,348.2 474.6,350.4"/>
<path d="M450.2,349.5 Q456.0,347.8 465.4,348.4"/>
<path d="M442.0,350.5 Q447.4,347.4 456.3,346.4"/>
<path d="M433.8,351.5 Q438.8,347.1 447.1,344.5"/>
<path d="M425.7,352.4 Q430.1,346.7 438.0,342.5"/>
<path d="M417.5,353.4 Q421.5,346.3 428.8,340.5"/>
<path d="M409.2,353.5 Q412.9,345.6 419.7,338.5"/>
<path d="M401.0,353.5 Q404.3,344.4 410.6,336.3"/>
<path d="M392.5,354.0 Q395.7,343.7 401.7,333.5"/>
<path d="M384.0,354.1 Q386.9,344.3 392.7,331.9"/>
<path d="M375.8,354.8 Q378.1,344.9 383.6,333.1"/>
<path d="M368.0,356.1 Q370.2,347.7 374.5,334.3"/>
<path d="M360.2,357.4 Q362.4,351.0 366.5,339.2"/>
<path d="M354.0,362.2 Q355.2,355.0 358.8,344.8"/>
<path d="M348.1,367.8 Q350.2,362.0 352.1,351.2"/>
<path d="M342.2,373.3 Q345.3,369.0 348.2,359.8"/>
<path d="M342.2,373.3 Q342.2,373.3 344.4,368.5"/>
<path d="M342.2,373.3 Q342.2,373.3 342.2,373.3"/>
<path d="M507.4,342.8 Q493.3,338.4 475.2,339.6"/>
<path d="M499.2,343.8 Q485.6,340.7 468.0,343.5"/>
<path d="M491.0,344.7 Q477.9,343.0 460.8,347.4"/>
<path d="M482.8,345.7 Q470.1,345.3 453.6,351.3"/>
<path d="M474.7,346.6 Q462.4,347.7 446.5,355.2"/>
<path d="M466.5,347.6 Q454.7,350.0 439.3,359.1"/>
<path d="M458.3,348.6 Q447.0,352.3 432.1,363.0"/>
<path d="M450.2,349.5 Q439.3,354.6 424.9,366.9"/>
<path d="M442.0,350.5 Q431.6,356.9 417.6,370.5"/>
<path d="M433.8,351.5 Q423.9,359.3 410.0,373.3"/>
<path d="M425.7,352.4 Q416.1,361.3 402.3,375.9"/>
<path d="M417.5,353.4 Q408.1,362.6 394.4,375.1"/>
<path d="M409.2,353.5 Q400.1,364.0 386.5,374.0"/>
<path d="M401.0,353.5 Q391.9,363.8 378.6,371.8"/>
<path d="M392.5,354.0 Q383.7,363.3 370.8,368.8"/>
<path d="M384.0,354.1 Q375.7,363.0 362.9,366.9"/>
<path d="M375.8,354.8 Q367.9,362.3 355.0,369.4"/>
<path d="M368.0,356.1 Q360.3,362.5 347.1,371.8"/>
<path d="M360.2,357.4 Q353.4,366.6 342.2,373.3"/>
<path d="M354.0,362.2 Q346.6,370.6 342.2,373.3"/>
<path d="M348.1,367.8 Q342.2,373.3 342.2,373.3"/>
</g>
<path d="M442.0,345.0 C437.4,342.5 421.9,342.4 414.4,341.0 C406.8,339.6 403.4,337.0 396.7,336.7 C390.0,336.4 381.4,336.6 374.4,339.0 C367.3,341.4 359.8,345.3 354.4,351.0 C349.0,356.7 340.7,371.1 342.2,373.3 C343.7,375.5 356.8,365.1 363.3,364.4 C369.8,363.7 374.7,367.9 381.0,369.0 C387.3,370.1 394.7,371.5 401.0,371.0 C407.3,370.5 412.2,368.5 419.0,366.0 C425.8,363.5 438.2,359.5 442.0,356.0 C445.8,352.5 446.6,347.5 442.0,345.0Z" fill="none" stroke="#000" stroke-width="1.25" stroke-linejoin="round"/>
<clipPath id="lf13"><path d="M460.0,360.0 C461.8,357.1 465.3,355.6 468.9,354.4 C472.4,353.2 476.9,352.7 481.3,352.7 C485.8,352.7 491.5,353.5 495.6,354.4 C499.8,355.3 503.2,356.2 506.2,358.0 C509.1,359.8 511.5,362.4 513.3,365.1 C515.1,367.8 516.0,370.7 516.9,374.0 C517.8,377.3 518.7,380.7 518.7,384.7 C518.7,388.7 519.5,397.0 517.0,398.0 C514.5,399.0 508.5,392.2 504.0,390.5 C499.5,388.8 494.1,388.8 490.0,388.0 C485.9,387.2 483.3,386.8 479.5,385.6 C475.7,384.4 470.6,383.0 467.0,380.7 C463.4,378.4 459.2,375.4 458.0,372.0 C456.8,368.6 458.2,362.9 460.0,360.0Z"/></clipPath>
<path d="M460.0,360.0 C461.8,357.1 465.3,355.6 468.9,354.4 C472.4,353.2 476.9,352.7 481.3,352.7 C485.8,352.7 491.5,353.5 495.6,354.4 C499.8,355.3 503.2,356.2 506.2,358.0 C509.1,359.8 511.5,362.4 513.3,365.1 C515.1,367.8 516.0,370.7 516.9,374.0 C517.8,377.3 518.7,380.7 518.7,384.7 C518.7,388.7 519.5,397.0 517.0,398.0 C514.5,399.0 508.5,392.2 504.0,390.5 C499.5,388.8 494.1,388.8 490.0,388.0 C485.9,387.2 483.3,386.8 479.5,385.6 C475.7,384.4 470.6,383.0 467.0,380.7 C463.4,378.4 459.2,375.4 458.0,372.0 C456.8,368.6 458.2,362.9 460.0,360.0Z" fill="#fff"/>
<g clip-path="url(#lf13)" stroke="#000" stroke-width="1.80" fill="none" stroke-linecap="round">
<path d="M459.0,366.0 C459.7,366.0 461.8,365.9 463.3,365.9 C464.7,365.9 466.1,366.0 467.7,366.2 C469.2,366.4 470.8,366.9 472.5,367.1 C474.1,367.4 475.9,367.5 477.7,367.8 C479.4,368.1 481.1,368.6 482.9,369.0 C484.6,369.4 486.4,369.7 488.1,370.1 C489.8,370.6 491.5,371.1 493.2,371.6 C494.9,372.2 496.6,372.7 498.2,373.4 C499.8,374.2 501.2,375.1 502.6,376.1 C504.0,377.0 505.2,378.1 506.3,379.1 C507.5,380.2 509.1,381.9 509.6,382.5" stroke-width="1.53"/>
<path d="M396.1,367.7 Q396.7,388.8 403.9,401.4"/>
<path d="M404.0,367.5 Q405.7,385.0 414.3,393.5"/>
<path d="M411.9,367.3 Q414.7,381.2 424.6,385.5"/>
<path d="M419.7,367.1 Q423.7,377.4 435.0,377.6"/>
<path d="M427.6,366.9 Q432.8,373.7 445.4,369.6"/>
<path d="M435.4,366.6 Q441.8,369.9 455.7,361.7"/>
<path d="M443.3,366.4 Q450.8,366.1 466.1,353.8"/>
<path d="M451.1,366.2 Q459.8,362.3 477.7,349.3"/>
<path d="M459.0,366.0 Q469.0,358.9 489.8,348.9"/>
<path d="M466.9,366.0 Q479.5,358.7 501.6,351.0"/>
<path d="M476.0,367.5 Q490.2,360.3 511.8,356.8"/>
<path d="M485.6,369.6 Q500.7,363.3 517.9,367.4"/>
<path d="M495.2,372.2 Q509.2,369.5 519.9,379.9"/>
<path d="M503.6,376.6 Q514.3,378.4 518.2,392.5"/>
<path d="M396.1,367.7 Q411.7,346.2 428.6,332.9"/>
<path d="M404.0,367.5 Q418.4,349.6 434.0,340.4"/>
<path d="M411.9,367.3 Q425.1,352.9 439.3,348.0"/>
<path d="M419.7,367.1 Q431.8,356.3 444.7,355.5"/>
<path d="M427.6,366.9 Q438.5,359.6 450.0,363.0"/>
<path d="M435.4,366.6 Q445.2,363.0 455.3,370.5"/>
<path d="M443.3,366.4 Q451.9,366.3 460.7,378.0"/>
<path d="M451.1,366.2 Q458.6,369.7 466.0,384.9"/>
<path d="M459.0,366.0 Q465.3,373.1 473.1,388.4"/>
<path d="M466.9,366.0 Q473.0,376.3 480.4,391.0"/>
<path d="M476.0,367.5 Q481.5,379.0 488.1,392.2"/>
<path d="M485.6,369.6 Q490.1,381.2 496.5,392.5"/>
<path d="M495.2,372.2 Q498.3,384.0 505.0,393.7"/>
<path d="M503.6,376.6 Q505.6,387.3 513.3,396.7"/>
</g>
<path d="M460.0,360.0 C461.8,357.1 465.3,355.6 468.9,354.4 C472.4,353.2 476.9,352.7 481.3,352.7 C485.8,352.7 491.5,353.5 495.6,354.4 C499.8,355.3 503.2,356.2 506.2,358.0 C509.1,359.8 511.5,362.4 513.3,365.1 C515.1,367.8 516.0,370.7 516.9,374.0 C517.8,377.3 518.7,380.7 518.7,384.7 C518.7,388.7 519.5,397.0 517.0,398.0 C514.5,399.0 508.5,392.2 504.0,390.5 C499.5,388.8 494.1,388.8 490.0,388.0 C485.9,387.2 483.3,386.8 479.5,385.6 C475.7,384.4 470.6,383.0 467.0,380.7 C463.4,378.4 459.2,375.4 458.0,372.0 C456.8,368.6 458.2,362.9 460.0,360.0Z" fill="none" stroke="#000" stroke-width="1.25" stroke-linejoin="round"/>
<clipPath id="lf14"><path d="M464.0,355.0 C461.0,354.7 455.2,356.7 450.0,358.0 C444.8,359.3 437.3,361.7 433.0,362.8 C428.7,363.9 427.7,363.1 424.1,364.6 C420.6,366.1 415.2,369.0 411.7,371.7 C408.1,374.4 405.2,376.8 402.8,380.6 C400.4,384.5 399.0,389.3 397.4,394.8 C395.8,400.3 391.1,411.2 393.0,413.4 C394.9,415.6 403.7,409.1 409.0,408.0 C414.3,406.9 419.8,407.3 425.0,406.5 C430.2,405.7 435.0,404.7 440.0,403.0 C445.0,401.3 450.8,399.0 455.0,396.5 C459.2,394.0 462.5,391.6 465.0,388.0 C467.5,384.4 469.5,379.7 470.0,375.0 C470.5,370.3 469.0,363.3 468.0,360.0 C467.0,356.7 467.0,355.3 464.0,355.0Z"/></clipPath>
<path d="M464.0,355.0 C461.0,354.7 455.2,356.7 450.0,358.0 C444.8,359.3 437.3,361.7 433.0,362.8 C428.7,363.9 427.7,363.1 424.1,364.6 C420.6,366.1 415.2,369.0 411.7,371.7 C408.1,374.4 405.2,376.8 402.8,380.6 C400.4,384.5 399.0,389.3 397.4,394.8 C395.8,400.3 391.1,411.2 393.0,413.4 C394.9,415.6 403.7,409.1 409.0,408.0 C414.3,406.9 419.8,407.3 425.0,406.5 C430.2,405.7 435.0,404.7 440.0,403.0 C445.0,401.3 450.8,399.0 455.0,396.5 C459.2,394.0 462.5,391.6 465.0,388.0 C467.5,384.4 469.5,379.7 470.0,375.0 C470.5,370.3 469.0,363.3 468.0,360.0 C467.0,356.7 467.0,355.3 464.0,355.0Z" fill="#fff"/>
<g clip-path="url(#lf14)" stroke="#000" stroke-width="1.80" fill="none" stroke-linecap="round">
<path d="M466.0,357.5 C465.5,358.2 464.1,360.4 463.1,361.8 C462.1,363.3 461.4,364.7 460.2,366.1 C458.9,367.6 457.2,369.0 455.7,370.5 C454.2,371.9 452.9,373.5 451.1,374.8 C449.3,376.0 447.0,377.0 445.0,378.0 C442.9,379.0 440.8,379.9 438.7,380.9 C436.6,382.0 434.5,383.0 432.4,384.1 C430.3,385.2 428.1,386.2 426.1,387.3 C424.0,388.4 422.1,389.5 420.1,390.6 C418.2,391.7 416.1,392.8 414.4,394.0 C412.6,395.2 410.3,397.1 409.5,397.7" stroke-width="1.53"/>
<path d="M500.3,306.5 Q516.6,330.2 519.6,350.1"/>
<path d="M496.0,312.9 Q508.9,334.1 507.9,350.9"/>
<path d="M491.8,319.3 Q501.2,337.9 496.2,351.8"/>
<path d="M487.5,325.7 Q493.5,341.7 484.5,352.7"/>
<path d="M483.2,332.0 Q485.8,345.6 472.8,353.6"/>
<path d="M478.9,338.4 Q478.1,349.4 461.1,354.4"/>
<path d="M474.6,344.8 Q470.4,353.2 449.3,355.3"/>
<path d="M470.3,351.1 Q462.6,357.1 438.4,356.8"/>
<path d="M466.0,357.5 Q454.9,360.9 428.0,358.7"/>
<path d="M461.7,363.9 Q446.4,365.1 418.0,360.7"/>
<path d="M455.9,370.2 Q437.3,368.9 409.2,365.9"/>
<path d="M448.5,376.2 Q427.8,372.3 402.0,373.3"/>
<path d="M439.4,380.7 Q418.7,377.3 397.6,382.8"/>
<path d="M430.0,385.3 Q410.7,383.4 395.1,393.6"/>
<path d="M421.0,390.1 Q404.6,390.7 394.0,404.7"/>
<path d="M412.8,395.3 Q399.7,398.6 393.0,413.4"/>
<path d="M500.3,306.5 Q473.0,299.2 453.6,303.8"/>
<path d="M496.0,312.9 Q472.2,308.1 456.7,315.7"/>
<path d="M491.8,319.3 Q471.3,317.0 459.9,327.5"/>
<path d="M487.5,325.7 Q470.4,325.9 463.0,339.4"/>
<path d="M483.2,332.0 Q469.6,334.8 466.1,351.3"/>
<path d="M478.9,338.4 Q468.7,343.7 469.2,363.1"/>
<path d="M474.6,344.8 Q467.8,352.6 472.3,375.0"/>
<path d="M470.3,351.1 Q467.0,361.5 470.7,386.2"/>
<path d="M466.0,357.5 Q466.1,370.4 465.4,395.6"/>
<path d="M461.7,363.9 Q461.6,379.0 457.0,402.4"/>
<path d="M455.9,370.2 Q454.6,386.1 447.1,406.5"/>
<path d="M448.5,376.2 Q445.7,391.5 436.4,408.9"/>
<path d="M439.4,380.7 Q436.1,395.9 425.2,409.9"/>
<path d="M430.0,385.3 Q426.4,399.6 413.5,409.6"/>
<path d="M421.0,390.1 Q417.0,402.8 402.0,411.4"/>
<path d="M412.8,395.3 Q407.8,405.5 393.0,413.4"/>
</g>
<path d="M464.0,355.0 C461.0,354.7 455.2,356.7 450.0,358.0 C444.8,359.3 437.3,361.7 433.0,362.8 C428.7,363.9 427.7,363.1 424.1,364.6 C420.6,366.1 415.2,369.0 411.7,371.7 C408.1,374.4 405.2,376.8 402.8,380.6 C400.4,384.5 399.0,389.3 397.4,394.8 C395.8,400.3 391.1,411.2 393.0,413.4 C394.9,415.6 403.7,409.1 409.0,408.0 C414.3,406.9 419.8,407.3 425.0,406.5 C430.2,405.7 435.0,404.7 440.0,403.0 C445.0,401.3 450.8,399.0 455.0,396.5 C459.2,394.0 462.5,391.6 465.0,388.0 C467.5,384.4 469.5,379.7 470.0,375.0 C470.5,370.3 469.0,363.3 468.0,360.0 C467.0,356.7 467.0,355.3 464.0,355.0Z" fill="none" stroke="#000" stroke-width="1.25" stroke-linejoin="round"/>
<path d="M426.4,186 L427.5,240 L429.5,292 L434,292 L432,240 L431.5,186 Z" fill="#fff" stroke="#000" stroke-width="1.38" stroke-linejoin="round" stroke-linecap="round"/>
<path d="M467,228 L463,250 L458.5,293 L462.5,294 L467,252 L471,229 Z" fill="#fff" stroke="#000" stroke-width="1.38" stroke-linejoin="round" stroke-linecap="round"/>
<path d="M427,221.5 L431.5,221.5 M427.5,236 L432,236" fill="none" stroke="#000" stroke-width="1.12" stroke-linejoin="round" stroke-linecap="round"/>
<path d="M429,250 l0,4 M429.5,262 l0,3" fill="none" stroke="#000" stroke-width="1.00" stroke-linejoin="round" stroke-linecap="round"/>
<clipPath id="heart"><path d="M452,315 C447,306 440,303 432,305 C421,309 413,320 413,333 C414,346 420,356 430,362 C437,366 442,369 447,372 C453,367 462,362 468,357 C476,350 480,340 479,330 C479,320 474,310 466,308 C459,307 455,310 452,315 Z"/></clipPath>
<path d="M452,315 C447,306 440,303 432,305 C421,309 413,320 413,333 C414,346 420,356 430,362 C437,366 442,369 447,372 C453,367 462,362 468,357 C476,350 480,340 479,330 C479,320 474,310 466,308 C459,307 455,310 452,315 Z" fill="#fff"/>
<g clip-path="url(#heart)" stroke="#000" stroke-width="1.25" fill="none" stroke-linecap="round">
<path d="M452.0,314.0 L445.9,309.3 L441.9,309.0 L438.4,309.5 L435.3,310.5 L432.6,311.8 L430.1,313.3 L427.9,315.1 L425.9,316.9 L424.2,318.8 L422.6,320.8 L421.2,322.9 L420.1,325.0 L419.1,327.1 L418.2,329.3 L417.6,331.5 L417.1,333.6 L416.7,335.8 L416.5,337.9 L416.5,340.1 L416.5,342.2 L416.8,344.3 L417.1,346.4 L417.5,348.5 L418.1,350.5 L418.8,352.5 L419.6,354.5 L420.4,356.4 L421.4,358.3 L422.4,360.2 L423.5,362.0 L424.7,363.8 L426.0,365.6 L427.3,367.4 L428.6,369.1 L430.0,370.8 L431.5,372.4 L433.0,374.0 L434.5,375.7 L436.0,377.3 L437.6,378.9"/>
<path d="M452.0,314.0 L446.9,310.5 L443.5,310.5 L440.6,311.2 L438.0,312.3 L435.7,313.7 L433.6,315.2 L431.8,316.9 L430.1,318.7 L428.6,320.6 L427.3,322.5 L426.1,324.5 L425.1,326.5 L424.3,328.6 L423.5,330.6 L423.0,332.7 L422.5,334.8 L422.2,336.8 L422.0,338.9 L422.0,340.9 L422.0,343.0 L422.2,345.0 L422.4,347.0 L422.8,349.0 L423.2,350.9 L423.7,352.9 L424.4,354.8 L425.1,356.7 L425.8,358.5 L426.7,360.3 L427.6,362.1 L428.5,363.9 L429.6,365.7 L430.6,367.4 L431.7,369.1 L432.9,370.8 L434.1,372.4 L435.3,374.0 L436.5,375.7 L437.8,377.3 L439.1,378.9"/>
<path d="M452.0,314.0 L447.9,311.6 L445.2,312.0 L442.8,312.9 L440.7,314.1 L438.8,315.5 L437.1,317.1 L435.6,318.8 L434.3,320.5 L433.0,322.3 L431.9,324.2 L431.0,326.1 L430.2,328.0 L429.4,330.0 L428.8,332.0 L428.4,333.9 L428.0,335.9 L427.7,337.9 L427.5,339.8 L427.4,341.8 L427.4,343.7 L427.5,345.7 L427.7,347.6 L428.0,349.5 L428.3,351.4 L428.7,353.2 L429.2,355.1 L429.7,356.9 L430.3,358.7 L430.9,360.5 L431.6,362.3 L432.4,364.0 L433.2,365.7 L434.0,367.4 L434.9,369.1 L435.8,370.8 L436.7,372.4 L437.6,374.0 L438.6,375.7 L439.6,377.3 L440.6,378.9"/>
<path d="M452.0,314.0 L448.9,312.7 L446.8,313.4 L445.0,314.5 L443.4,315.8 L442.0,317.3 L440.7,318.9 L439.5,320.6 L438.4,322.3 L437.5,324.0 L436.6,325.8 L435.9,327.7 L435.2,329.5 L434.6,331.4 L434.2,333.2 L433.8,335.1 L433.4,337.0 L433.2,338.9 L433.0,340.7 L432.9,342.6 L432.9,344.5 L432.9,346.3 L433.0,348.2 L433.2,350.0 L433.4,351.8 L433.7,353.6 L434.0,355.4 L434.4,357.2 L434.8,358.9 L435.2,360.6 L435.7,362.4 L436.2,364.1 L436.8,365.8 L437.4,367.5 L438.0,369.1 L438.6,370.8 L439.3,372.4 L439.9,374.0 L440.6,375.7 L441.3,377.3 L442.0,378.9"/>
<path d="M452.0,314.0 L449.9,313.7 L448.4,314.8 L447.2,316.1 L446.1,317.5 L445.1,319.0 L444.2,320.6 L443.3,322.3 L442.6,324.0 L441.9,325.7 L441.3,327.4 L440.7,329.2 L440.3,330.9 L439.8,332.7 L439.5,334.5 L439.1,336.3 L438.9,338.1 L438.7,339.9 L438.5,341.6 L438.4,343.4 L438.3,345.2 L438.3,346.9 L438.3,348.7 L438.4,350.5 L438.5,352.2 L438.6,353.9 L438.8,355.7 L439.0,357.4 L439.2,359.1 L439.5,360.8 L439.8,362.5 L440.1,364.2 L440.4,365.8 L440.7,367.5 L441.1,369.1 L441.5,370.8 L441.9,372.4 L442.3,374.0 L442.7,375.7 L443.1,377.3 L443.5,378.9"/>
<path d="M452.0,314.0 L450.9,314.7 L450.1,316.1 L449.4,317.6 L448.8,319.1 L448.2,320.7 L447.7,322.3 L447.2,323.9 L446.7,325.6 L446.3,327.2 L446.0,328.9 L445.6,330.6 L445.3,332.3 L445.0,334.0 L444.8,335.7 L444.5,337.4 L444.3,339.1 L444.2,340.8 L444.0,342.5 L443.9,344.2 L443.8,345.9 L443.7,347.5 L443.7,349.2 L443.6,350.9 L443.6,352.6 L443.6,354.3 L443.6,355.9 L443.6,357.6 L443.7,359.3 L443.7,360.9 L443.8,362.6 L443.9,364.2 L444.0,365.9 L444.1,367.5 L444.2,369.2 L444.3,370.8 L444.5,372.4 L444.6,374.0 L444.7,375.7 L444.9,377.3 L445.0,378.9"/>
<path d="M452.0,314.0 L451.9,315.6 L451.7,317.2 L451.6,318.9 L451.4,320.5 L451.3,322.1 L451.2,323.7 L451.0,325.4 L450.9,327.0 L450.8,328.6 L450.6,330.2 L450.5,331.8 L450.4,333.5 L450.2,335.1 L450.1,336.7 L449.9,338.3 L449.8,340.0 L449.7,341.6 L449.5,343.2 L449.4,344.8 L449.2,346.4 L449.1,348.1 L449.0,349.7 L448.8,351.3 L448.7,352.9 L448.6,354.6 L448.4,356.2 L448.3,357.8 L448.1,359.4 L448.0,361.1 L447.9,362.7 L447.7,364.3 L447.6,365.9 L447.5,367.5 L447.3,369.2 L447.2,370.8 L447.1,372.4 L446.9,374.0 L446.8,375.7 L446.6,377.3 L446.5,378.9"/>
<path d="M452.0,314.0 L452.8,314.7 L453.4,316.1 L453.8,317.6 L454.1,319.1 L454.4,320.7 L454.7,322.3 L454.9,323.9 L455.1,325.6 L455.2,327.2 L455.3,328.9 L455.4,330.6 L455.4,332.3 L455.4,334.0 L455.4,335.7 L455.3,337.4 L455.3,339.1 L455.2,340.8 L455.0,342.5 L454.9,344.2 L454.7,345.9 L454.5,347.5 L454.3,349.2 L454.1,350.9 L453.8,352.6 L453.5,354.3 L453.2,355.9 L452.9,357.6 L452.6,359.3 L452.3,360.9 L451.9,362.6 L451.6,364.2 L451.2,365.9 L450.8,367.5 L450.4,369.2 L450.0,370.8 L449.6,372.4 L449.2,374.0 L448.8,375.7 L448.4,377.3 L448.0,378.9"/>
<path d="M452.0,314.0 L453.8,313.7 L455.0,314.8 L456.0,316.1 L456.8,317.5 L457.6,319.0 L458.2,320.6 L458.7,322.3 L459.2,324.0 L459.6,325.7 L460.0,327.4 L460.2,329.2 L460.4,330.9 L460.6,332.7 L460.7,334.5 L460.7,336.3 L460.7,338.1 L460.6,339.9 L460.5,341.6 L460.4,343.4 L460.2,345.2 L459.9,346.9 L459.6,348.7 L459.3,350.5 L458.9,352.2 L458.5,353.9 L458.0,355.7 L457.6,357.4 L457.1,359.1 L456.5,360.8 L456.0,362.5 L455.4,364.2 L454.8,365.8 L454.2,367.5 L453.6,369.1 L452.9,370.8 L452.2,372.4 L451.6,374.0 L450.9,375.7 L450.2,377.3 L449.5,378.9"/>
<path d="M452.0,314.0 L454.8,312.7 L456.7,313.4 L458.2,314.5 L459.5,315.8 L460.7,317.3 L461.7,318.9 L462.6,320.6 L463.4,322.3 L464.1,324.0 L464.6,325.8 L465.1,327.7 L465.5,329.5 L465.8,331.4 L466.0,333.2 L466.1,335.1 L466.2,337.0 L466.1,338.9 L466.0,340.7 L465.8,342.6 L465.6,344.5 L465.3,346.3 L464.9,348.2 L464.5,350.0 L464.0,351.8 L463.5,353.6 L462.9,355.4 L462.2,357.2 L461.5,358.9 L460.8,360.6 L460.1,362.4 L459.3,364.1 L458.4,365.8 L457.6,367.5 L456.7,369.1 L455.8,370.8 L454.8,372.4 L453.9,374.0 L452.9,375.7 L451.9,377.3 L451.0,378.9"/>
<path d="M452.0,314.0 L455.8,311.6 L458.3,312.0 L460.4,312.9 L462.2,314.1 L463.8,315.5 L465.2,317.1 L466.4,318.8 L467.5,320.5 L468.5,322.3 L469.3,324.2 L470.0,326.1 L470.5,328.0 L471.0,330.0 L471.3,332.0 L471.5,333.9 L471.6,335.9 L471.6,337.9 L471.5,339.8 L471.3,341.8 L471.1,343.7 L470.7,345.7 L470.2,347.6 L469.7,349.5 L469.1,351.4 L468.4,353.2 L467.7,355.1 L466.9,356.9 L466.0,358.7 L465.1,360.5 L464.1,362.3 L463.1,364.0 L462.0,365.7 L460.9,367.4 L459.8,369.1 L458.6,370.8 L457.4,372.4 L456.2,374.0 L455.0,375.7 L453.7,377.3 L452.4,378.9"/>
<path d="M452.0,314.0 L456.8,310.5 L459.9,310.5 L462.6,311.2 L464.9,312.3 L466.9,313.7 L468.7,315.2 L470.3,316.9 L471.7,318.7 L472.9,320.6 L474.0,322.5 L474.9,324.5 L475.6,326.5 L476.2,328.6 L476.6,330.6 L476.9,332.7 L477.1,334.8 L477.1,336.8 L477.0,338.9 L476.8,340.9 L476.5,343.0 L476.1,345.0 L475.5,347.0 L474.9,349.0 L474.2,350.9 L473.4,352.9 L472.5,354.8 L471.5,356.7 L470.5,358.5 L469.3,360.3 L468.2,362.1 L466.9,363.9 L465.6,365.7 L464.3,367.4 L462.9,369.1 L461.5,370.8 L460.0,372.4 L458.5,374.0 L457.0,375.7 L455.5,377.3 L453.9,378.9"/>
<path d="M452.0,314.0 L457.8,309.3 L461.6,309.0 L464.8,309.5 L467.6,310.5 L470.0,311.8 L472.2,313.3 L474.2,315.1 L475.9,316.9 L477.4,318.8 L478.6,320.8 L479.7,322.9 L480.6,325.0 L481.4,327.1 L481.9,329.3 L482.3,331.5 L482.5,333.6 L482.6,335.8 L482.5,337.9 L482.3,340.1 L482.0,342.2 L481.5,344.3 L480.9,346.4 L480.1,348.5 L479.3,350.5 L478.3,352.5 L477.3,354.5 L476.2,356.4 L474.9,358.3 L473.6,360.2 L472.2,362.0 L470.8,363.8 L469.2,365.6 L467.7,367.4 L466.0,369.1 L464.3,370.8 L462.6,372.4 L460.9,374.0 L459.1,375.7 L457.2,377.3 L455.4,378.9"/>
</g>
<path d="M452,315 C447,306 440,303 432,305 C421,309 413,320 413,333 C414,346 420,356 430,362 C437,366 442,369 447,372 C453,367 462,362 468,357 C476,350 480,340 479,330 C479,320 474,310 466,308 C459,307 455,310 452,315 Z" fill="none" stroke="#000" stroke-width="1.15"/>
<path d="M372.4,159.2 C377,157.5 380,156.8 383,157 C388,157.5 391,158.6 393.8,160 C397,162 400,164 402.7,165.4 C406,167.5 410,169 414,170.5 L412,173 C408,172 404,171.2 397.3,171 C392,172 389,173.4 385,173.4 C380,173.2 376,172 373.3,170.8 L377.5,166.3 L372.8,164.6 L377,162 Z" fill="#fff" stroke="#000" stroke-width="1.62" stroke-linejoin="round" stroke-linecap="round"/>
<path d="M397,171 C402,170 407,169.8 412,171.5" fill="none" stroke="#000" stroke-width="1.88" stroke-linejoin="round" stroke-linecap="round"/>
<path d="M392,163.5 l0.4,0.4 M388,168 l0.4,0.3" fill="none" stroke="#000" stroke-width="1.12" stroke-linejoin="round" stroke-linecap="round"/>
<path d="M424,181 C414,185 402,190 392,193.3 C386,194.5 378,194 370,194 C366,193.5 364.5,193 364,192.7 C368,195 372,196.5 377,197.2 C372,199 368,200 364.5,201 C369,202.5 373,203 378,203.2 C373,206 369,208 366,210.5 C370,210.8 374,210 379.5,208 C377,211 374,214 372,217 C377,215 382,210 386.7,203 C392,198 398,195 404,192 C411,189 418,186.5 426,184.5 Z" fill="#fff" stroke="#000" stroke-width="1.50" stroke-linejoin="round" stroke-linecap="round"/>
<path d="M370,198.6 L381,199.3 M369.5,205.5 L381.5,203.5" fill="none" stroke="#000" stroke-width="1.12" stroke-linejoin="round" stroke-linecap="round"/>
<path d="M387,199 l0.4,0.3 M390,197 l0.4,0.3" fill="none" stroke="#000" stroke-width="1.12" stroke-linejoin="round" stroke-linecap="round"/>
<path d="M403,176.5 C404,173 411,171.5 419,172.5 C424,173.5 426,176.5 423.5,179.5 C418,182.5 406,182 403,176.5 Z" fill="#fff" stroke="#000" stroke-width="1.50" stroke-linejoin="round" stroke-linecap="round"/>
<path d="M428,178 C421,176 415,171 412.5,165.5 C418,164 424,168 429,174 Z" fill="#fff" stroke="#000" stroke-width="1.38" stroke-linejoin="round" stroke-linecap="round"/>
<path d="M428,178 C421,171 417,164 417.5,157.5 C423,159 427,166 430,174 Z" fill="#fff" stroke="#000" stroke-width="1.38" stroke-linejoin="round" stroke-linecap="round"/>
<path d="M428.5,178 C423.5,169 423,160 426.5,153 C431.5,158 433,167 431.5,176 Z" fill="#fff" stroke="#000" stroke-width="1.38" stroke-linejoin="round" stroke-linecap="round"/>
<path d="M429.5,177.5 C429,168 431.5,159 436,153.5 C439.5,159 438,169 433,177 Z" fill="#fff" stroke="#000" stroke-width="1.38" stroke-linejoin="round" stroke-linecap="round"/>
<path d="M430,177 C432.5,170 436.5,164 442,160.5 C443,166 439,173 433,178 Z" fill="#fff" stroke="#000" stroke-width="1.38" stroke-linejoin="round" stroke-linecap="round"/>
<path d="M421,160 C422,163 424,167 426,170 M431,158 C431,163 431,168 431,172" fill="none" stroke="#000" stroke-width="0.88" stroke-linejoin="round" stroke-linecap="round"/>
<path d="M431,174 C436,170 440,165 443.5,158 L447.8,148.9 L450.5,153.5 L452.2,147.8 L454.5,153 L457.8,152.2 L457.5,156.5 L461.7,161 L456.5,162 C451,166 444,171 436,177.5 Z" fill="#fff" stroke="#000" stroke-width="1.56" stroke-linejoin="round" stroke-linecap="round"/>
<path d="M444,162 L452,156 M447,165 L456,160 M440,168 L448,163" fill="none" stroke="#000" stroke-width="1.00" stroke-linejoin="round" stroke-linecap="round"/>
<path d="M431,176 C433,171 439,169 445,170 C448.5,171 448,175 445,177 C440,179.5 434,179.5 431,176 Z" fill="#fff" stroke="#000" stroke-width="1.44" stroke-linejoin="round" stroke-linecap="round"/>
<path d="M432,179 C443,177 455,176 464,174.5 C470,173 476,170 480.3,166.7 C481,172 479,176 473,179 C462,180 450,181 437,182.5 Z" fill="#fff" stroke="#000" stroke-width="1.50" stroke-linejoin="round" stroke-linecap="round"/>
<path d="M477.0,181.5 Q480.9,173.1 474.0,167.0 Q470.1,175.4 477.0,181.5 Z" fill="#fff" stroke="#000" stroke-width="1.38" stroke-linejoin="round" stroke-linecap="round"/>
<path d="M477.0,181.5 Q486.7,183.3 492.0,175.0 Q482.3,173.2 477.0,181.5 Z" fill="#fff" stroke="#000" stroke-width="1.38" stroke-linejoin="round" stroke-linecap="round"/>
<path d="M477.0,181.5 Q479.9,191.4 490.0,193.0 Q487.1,183.1 477.0,181.5 Z" fill="#fff" stroke="#000" stroke-width="1.38" stroke-linejoin="round" stroke-linecap="round"/>
<path d="M477.0,181.5 Q470.5,190.2 475.0,200.0 Q481.5,191.3 477.0,181.5 Z" fill="#fff" stroke="#000" stroke-width="1.38" stroke-linejoin="round" stroke-linecap="round"/>
<path d="M477.0,181.5 Q467.8,180.5 464.0,189.0 Q473.2,190.0 477.0,181.5 Z" fill="#fff" stroke="#000" stroke-width="1.38" stroke-linejoin="round" stroke-linecap="round"/>
<path d="M476.3,181.3 L489.7,169.3 M476.3,181.3 L493,178.7 M476.3,181.3 L492,187.7 M476.3,181.3 L487,195 M485,168 l3,-4 M491,173 l4,-2" fill="none" stroke="#000" stroke-width="1.00" stroke-linejoin="round" stroke-linecap="round"/>
<circle cx="476.3" cy="181.3" r="1.6" fill="#000"/>
<path d="M430,180 L447,198 L450,196 L433,178 Z" fill="#fff" stroke="#000" stroke-width="1.38" stroke-linejoin="round" stroke-linecap="round"/>
<path d="M448,208 C460,211 474,215.5 484,219.5 C490,221.5 495,224 499.4,228 L496,232 C489,228 482,225.5 474,223.5 C466,221.5 456,218 448,214 Z" fill="#fff" stroke="#000" stroke-width="1.50" stroke-linejoin="round" stroke-linecap="round"/>
<path d="M450,199.5 C446,195 442,193 439,193 C439,197 443,200 449,201 Z" fill="#fff" stroke="#000" stroke-width="1.38" stroke-linejoin="round" stroke-linecap="round"/>
<path d="M450,199.5 C448,194 448,190 450,187.5 C453,190 453,195 451,199 Z" fill="#fff" stroke="#000" stroke-width="1.25" stroke-linejoin="round" stroke-linecap="round"/>
<path d="M450,199.5 C455,195 460,193 464,194 C462,198 457,201 451,201.5 Z" fill="#fff" stroke="#000" stroke-width="1.38" stroke-linejoin="round" stroke-linecap="round"/>
<path d="M450,200 C455,202 460,205 462,209 C457,210 452,207 449,202 Z" fill="#fff" stroke="#000" stroke-width="1.38" stroke-linejoin="round" stroke-linecap="round"/>
<path d="M450,200 C447,205 444,209 441,211 C441,206 444,202 448,199.5 Z" fill="#fff" stroke="#000" stroke-width="1.38" stroke-linejoin="round" stroke-linecap="round"/>
<path d="M440.5,203 C444,201.5 448,201.5 450,203 C447,206 443,207 440.5,206 Z" fill="#fff" stroke="#000" stroke-width="1.25" stroke-linejoin="round" stroke-linecap="round"/>
<path d="M452.0,201.0 Q462.2,200.4 468.0,192.0 Q457.8,192.6 452.0,201.0 Z" fill="#fff" stroke="#000" stroke-width="1.38" stroke-linejoin="round" stroke-linecap="round"/>
<path d="M452.0,201.0 Q451.5,191.6 444.0,186.0 Q444.5,195.4 452.0,201.0 Z" fill="#fff" stroke="#000" stroke-width="1.38" stroke-linejoin="round" stroke-linecap="round"/>
<circle cx="450.3" cy="199.8" r="1.3" fill="#000"/>
<path d="M447,208 C443,211 438,216 434,222 C438,223 443,220 446.7,213 Z" fill="#fff" stroke="#000" stroke-width="1.38" stroke-linejoin="round" stroke-linecap="round"/>
<path d="M426,190 C421,195 417,200 414,206 L407,212 L411,211 L410,216 L415,213 L417,219 L421,214 C423,208 425,200 428,194 Z" fill="#fff" stroke="#000" stroke-width="1.38" stroke-linejoin="round" stroke-linecap="round"/>
<path d="M421,189 C417,192 414,196 412,200 C416,199 420,196 424,192 Z" fill="#fff" stroke="#000" stroke-width="1.25" stroke-linejoin="round" stroke-linecap="round"/>
<path d="M463,207 C471,205 479,205 487,206 C489,201 493,194 497.7,188.7 L501.7,195.3 L506.3,192 L505.7,199.3 L511,200.7 C507,204 503,208 497,211 C493,213 489,213.5 485,212.5 C478,212 470,211.5 463,211 Z" fill="#fff" stroke="#000" stroke-width="1.50" stroke-linejoin="round" stroke-linecap="round"/>
<path d="M492,204 L500,197 M495,208 L505,202" fill="none" stroke="#000" stroke-width="1.00" stroke-linejoin="round" stroke-linecap="round"/>
<path d="M458,190 C462,187 467,187 470,190 C467,194 462,195 458,194 Z" fill="#fff" stroke="#000" stroke-width="1.25" stroke-linejoin="round" stroke-linecap="round"/>
<path d="M466,196 C470,192 476,192 479,195 C476,199 470,200 466,199 Z" fill="#fff" stroke="#000" stroke-width="1.25" stroke-linejoin="round" stroke-linecap="round"/>
<path d="M505.6,231.8 Q514.6,226.8 514.0,216.5 Q505.0,221.5 505.6,231.8 Z" fill="#fff" stroke="#000" stroke-width="1.38" stroke-linejoin="round" stroke-linecap="round"/>
<path d="M505.6,231.8 Q514.3,235.8 521.0,229.0 Q512.3,225.0 505.6,231.8 Z" fill="#fff" stroke="#000" stroke-width="1.38" stroke-linejoin="round" stroke-linecap="round"/>
<path d="M505.6,231.8 Q507.4,241.3 517.0,243.0 Q515.2,233.5 505.6,231.8 Z" fill="#fff" stroke="#000" stroke-width="1.38" stroke-linejoin="round" stroke-linecap="round"/>
<path d="M505.6,231.8 Q498.0,239.3 501.0,249.5 Q508.6,242.0 505.6,231.8 Z" fill="#fff" stroke="#000" stroke-width="1.38" stroke-linejoin="round" stroke-linecap="round"/>
<path d="M505.6,231.8 Q496.0,230.5 491.5,239.0 Q501.1,240.3 505.6,231.8 Z" fill="#fff" stroke="#000" stroke-width="1.38" stroke-linejoin="round" stroke-linecap="round"/>
<path d="M505.6,231.8 L525,235.5 M505.6,231.8 L522.7,241.6 M505.6,231.8 L511.7,251.3 M505.6,231.8 L517.8,251.3 M505.6,231.8 L524,232.4 M506,231 L514,224" fill="none" stroke="#000" stroke-width="1.00" stroke-linejoin="round" stroke-linecap="round"/>
<circle cx="505.6" cy="231.8" r="1.5" fill="#000"/>
<path d="M468,219 C473,217 478,218 483,222 L480,226 L483,231 C477,232 471,230 468,226 Z" fill="#fff" stroke="#000" stroke-width="1.25" stroke-linejoin="round" stroke-linecap="round"/>
<path d="M475,220 C471,223 468,227 466,230 C464,233 463,235 462,237 L458,233 L457,238 L451,236 L454,240.5 L447,242 L452,244.5 L449.5,246 L456,245.5 L460,247 C461,243 463,240 465,238 C467,234 470,229 473,226 C475,224 477,222 478,221 Z" fill="#fff" stroke="#000" stroke-width="1.44" stroke-linejoin="round" stroke-linecap="round"/>
<path d="M455,240 L462,238 M458,244 L463,240" fill="none" stroke="#000" stroke-width="1.00" stroke-linejoin="round" stroke-linecap="round"/>
<g id="bbox" fill="none">
<path d="M572.3,126.7 H325.3 V438 H572.3" stroke="#adbbf2" stroke-width="0.9"/>
<path d="M572.3,126.7 V438" stroke="#6a80e0" stroke-width="1"/>
<line x1="325.3" y1="126.7" x2="572.3" y2="438" stroke="#6078dc" stroke-width="0.85"/>
<line x1="572.3" y1="126.7" x2="325.3" y2="438" stroke="#6078dc" stroke-width="0.85"/>
<g fill="#4d66da" stroke="none">
<rect x="324" y="125.4" width="2.7" height="2.7"/><rect x="571" y="125.4" width="2.7" height="2.7"/>
<rect x="324" y="436.6" width="2.7" height="2.7"/><rect x="571" y="436.6" width="2.7" height="2.7"/>
</g>
</g>
</svg>
<svg class="abs" style="left:0;top:0" width="170" height="50" viewBox="0 0 170 50">
<path d="M11.4,15 L11.4,31.2 A8.4,8.4 0 0 0 28.2,31.2 L28.2,15" fill="none" stroke="#f06a4b" stroke-width="7.2"/>
<path d="M46.25,42 L46.25,14.5 M46.25,26.8 A8.5,8.5 0 0 1 63.25,26.8 L63.25,42" fill="none" stroke="#0f77c0" stroke-width="7.4"/>
<path d="M46.25,42 L46.25,22" fill="none" stroke="#0f77c0" stroke-width="7.4"/>
<rect x="77" y="15.7" width="7.2" height="25.8" fill="#0f77c0"/>
<path d="M81,7 L87,10.5 L85.5,15 L77,15 L75.2,10.5 Z" fill="#0f77c0"/>
<path d="M116.6,20.4 A11.2,11.2 0 1 0 116.6,35.6" fill="none" stroke="#0f77c0" stroke-width="7.1"/>
<circle cx="144.8" cy="28.6" r="10.4" fill="none" stroke="#0f77c0" stroke-width="7.2"/>
<rect x="151.8" y="15" width="7.2" height="27.3" fill="#0f77c0"/>
<circle cx="144.4" cy="28.5" r="7.3" fill="#2f2a27" fill-opacity="0.3" stroke="#a0703e" stroke-width="0.9" stroke-opacity="0.8"/>
</svg>

</body></html>
